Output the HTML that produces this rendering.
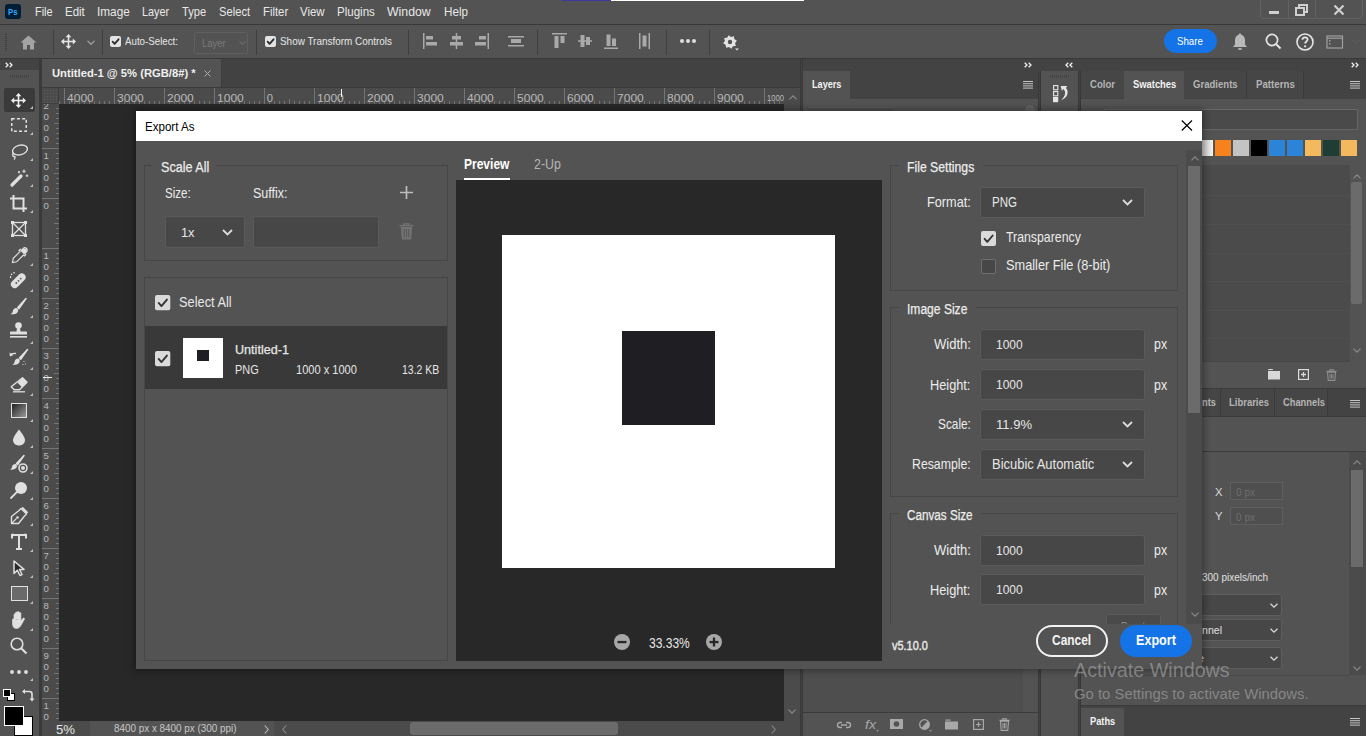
<!DOCTYPE html>
<html><head><meta charset="utf-8">
<style>
*{margin:0;padding:0;box-sizing:border-box}
html,body{width:1366px;height:736px;overflow:hidden;background:#535353;font-family:"Liberation Sans",sans-serif;color:#e6e6e6;position:relative}
.a{position:absolute}
.t{position:absolute;white-space:nowrap;line-height:1}
svg{position:absolute;overflow:visible}
</style></head><body>
<div class="a" style="left:0px;top:0px;width:1366px;height:24px;background:#535353;"></div>
<div class="a" style="left:0px;top:24px;width:1366px;height:1px;background:#383838;"></div>
<div class="a" style="left:562px;top:0px;width:49px;height:1px;background:#3a3aa0;"></div>
<div class="a" style="left:611px;top:0px;width:193px;height:1px;background:#ffffff;"></div>
<div class="a" style="left:5px;top:4px;width:16px;height:15px;background:#001e36;border-radius:3px"></div>
<div class="t" style="left:7.60px;top:7.58px;font-size:9px;color:#31a8ff;font-weight:700;transform:scaleX(0.862);transform-origin:0 0;">Ps</div>
<div class="t" style="left:35.10px;top:6.43px;font-size:12.6px;color:#e8e8e8;transform:scaleX(0.867);transform-origin:0 0;">File</div>
<div class="t" style="left:65.40px;top:6.43px;font-size:12.6px;color:#e8e8e8;transform:scaleX(0.912);transform-origin:0 0;">Edit</div>
<div class="t" style="left:97.20px;top:6.43px;font-size:12.6px;color:#e8e8e8;transform:scaleX(0.937);transform-origin:0 0;">Image</div>
<div class="t" style="left:142.40px;top:6.43px;font-size:12.6px;color:#e8e8e8;transform:scaleX(0.863);transform-origin:0 0;">Layer</div>
<div class="t" style="left:182.40px;top:6.43px;font-size:12.6px;color:#e8e8e8;transform:scaleX(0.882);transform-origin:0 0;">Type</div>
<div class="t" style="left:219.10px;top:6.43px;font-size:12.6px;color:#e8e8e8;transform:scaleX(0.888);transform-origin:0 0;">Select</div>
<div class="t" style="left:262.50px;top:6.43px;font-size:12.6px;color:#e8e8e8;transform:scaleX(0.900);transform-origin:0 0;">Filter</div>
<div class="t" style="left:300.40px;top:6.43px;font-size:12.6px;color:#e8e8e8;transform:scaleX(0.908);transform-origin:0 0;">View</div>
<div class="t" style="left:337.30px;top:6.43px;font-size:12.6px;color:#e8e8e8;transform:scaleX(0.917);transform-origin:0 0;">Plugins</div>
<div class="t" style="left:386.90px;top:6.43px;font-size:12.6px;color:#e8e8e8;transform:scaleX(0.976);transform-origin:0 0;">Window</div>
<div class="t" style="left:443.50px;top:6.43px;font-size:12.6px;color:#e8e8e8;transform:scaleX(0.926);transform-origin:0 0;">Help</div>
<div class="a" style="left:1260px;top:-2px;width:103px;height:21px;border:1px solid #626262;border-radius:0 0 4px 4px"></div>
<div class="a" style="left:1288px;top:0px;width:1px;height:19px;background:#626262;"></div>
<div class="a" style="left:1315px;top:0px;width:1px;height:19px;background:#626262;"></div>
<div class="a" style="left:1269px;top:11px;width:10px;height:3px;background:#cfcfcf;"></div>
<svg style="left:1295px;top:4px;" width="14" height="12" viewBox="0 0 14 12"><rect x="1" y="4" width="8" height="7" fill="none" stroke="#cfcfcf" stroke-width="2"/><path d="M4 4V1h8v7H9" fill="none" stroke="#cfcfcf" stroke-width="2"/></svg>
<svg style="left:1333px;top:5px;" width="12" height="10" viewBox="0 0 12 10"><path d="M1.5 0.5L10.5 9.5M10.5 0.5L1.5 9.5" stroke="#cfcfcf" stroke-width="2.2"/></svg>
<div class="a" style="left:0px;top:25px;width:1366px;height:33px;background:#535353;"></div>
<div class="a" style="left:0px;top:58px;width:1366px;height:1px;background:#383838;"></div>
<div class="a" style="left:5px;top:34px;width:2px;height:1px;background:#3e3e3e;"></div>
<div class="a" style="left:5px;top:36px;width:2px;height:1px;background:#3e3e3e;"></div>
<div class="a" style="left:5px;top:38px;width:2px;height:1px;background:#3e3e3e;"></div>
<div class="a" style="left:5px;top:40px;width:2px;height:1px;background:#3e3e3e;"></div>
<div class="a" style="left:5px;top:42px;width:2px;height:1px;background:#3e3e3e;"></div>
<div class="a" style="left:5px;top:44px;width:2px;height:1px;background:#3e3e3e;"></div>
<div class="a" style="left:5px;top:46px;width:2px;height:1px;background:#3e3e3e;"></div>
<div class="a" style="left:5px;top:48px;width:2px;height:1px;background:#3e3e3e;"></div>
<div class="a" style="left:5px;top:50px;width:2px;height:1px;background:#3e3e3e;"></div>
<svg style="left:20px;top:35px;" width="17" height="15" viewBox="0 0 17 15"><path d="M8.5 0.5L0.5 7.5H3V14.5H7V10H10V14.5H14V7.5H16.5Z" fill="#a3a3a3"/></svg>
<div class="a" style="left:53px;top:30px;width:1px;height:25px;background:#3f3f3f;"></div>
<svg style="left:61px;top:34px;" width="15" height="15" viewBox="0 0 15 15"><g fill="none" stroke="#e6e6e6" stroke-width="1.6"><path d="M7.5 1.5V13.5M1.5 7.5H13.5"/></g><g fill="#e6e6e6"><path d="M7.5 0L4.6 3.2H10.4Z"/><path d="M7.5 15L4.6 11.8H10.4Z"/><path d="M0 7.5L3.2 4.6V10.4Z"/><path d="M15 7.5L11.8 4.6V10.4Z"/></g></svg>
<svg style="left:87px;top:40px;" width="8" height="6" viewBox="0 0 8 6"><path d="M0.5 0.8L4 4.3L7.5 0.8" fill="none" stroke="#9a9a9a" stroke-width="1.3"/></svg>
<div class="a" style="left:102px;top:30px;width:1px;height:25px;background:#3f3f3f;"></div>
<svg style="left:110px;top:36px;" width="11" height="11" viewBox="0 0 11 11"><rect x="0" y="0" width="11" height="11" rx="2" fill="#e3e3e3"/><path d="M2.6399999999999997 5.720000000000001L4.62 7.92L8.58 3.3" fill="none" stroke="#2b2b2b" stroke-width="1.8" stroke-linecap="round" stroke-linejoin="round"/></svg>
<div class="t" style="left:125.00px;top:36.08px;font-size:11px;color:#e6e6e6;transform:scaleX(0.884);transform-origin:0 0;">Auto-Select:</div>
<div class="a" style="left:194px;top:32px;width:54px;height:22px;border:1px solid #5f5f5f;border-radius:2px"></div>
<div class="t" style="left:202.00px;top:37.88px;font-size:11px;color:#7a7a7a;transform:scaleX(0.861);transform-origin:0 0;">Layer</div>
<svg style="left:239px;top:41px;" width="7" height="5" viewBox="0 0 7 5"><path d="M0.5 0.5L3.5 3.5L6.5 0.5" fill="none" stroke="#6a6a6a" stroke-width="1.2"/></svg>
<div class="a" style="left:256px;top:30px;width:1px;height:25px;background:#3f3f3f;"></div>
<svg style="left:265px;top:36px;" width="11" height="11" viewBox="0 0 11 11"><rect x="0" y="0" width="11" height="11" rx="2" fill="#e3e3e3"/><path d="M2.6399999999999997 5.720000000000001L4.62 7.92L8.58 3.3" fill="none" stroke="#2b2b2b" stroke-width="1.8" stroke-linecap="round" stroke-linejoin="round"/></svg>
<div class="t" style="left:280.00px;top:35.88px;font-size:11px;color:#e6e6e6;transform:scaleX(0.902);transform-origin:0 0;">Show Transform Controls</div>
<div class="a" style="left:408px;top:30px;width:1px;height:25px;background:#3f3f3f;"></div>
<svg style="left:423px;top:33px;" width="15" height="16" viewBox="0 0 15 16"><rect x="0" y="0" width="1.5" height="16" fill="#a9a9a9"/><rect x="3" y="3" width="7" height="3.5" fill="#a9a9a9"/><rect x="3" y="9" width="11" height="3.5" fill="#a9a9a9"/></svg>
<svg style="left:450px;top:33px;" width="13" height="16" viewBox="0 0 13 16"><rect x="5.75" y="0" width="1.5" height="16" fill="#a9a9a9"/><rect x="2" y="3" width="9" height="3.5" fill="#a9a9a9"/><rect x="0" y="9" width="13" height="3.5" fill="#a9a9a9"/></svg>
<svg style="left:474px;top:33px;" width="15" height="16" viewBox="0 0 15 16"><rect x="13.5" y="0" width="1.5" height="16" fill="#a9a9a9"/><rect x="5" y="3" width="7" height="3.5" fill="#a9a9a9"/><rect x="1" y="9" width="11" height="3.5" fill="#a9a9a9"/></svg>
<svg style="left:508px;top:33px;" width="17" height="16" viewBox="0 0 17 16"><rect x="0" y="3" width="16" height="1.5" fill="#a9a9a9"/><rect x="0" y="12" width="16" height="1.5" fill="#a9a9a9"/><rect x="3" y="6" width="10" height="4" fill="#a9a9a9"/></svg>
<div class="a" style="left:537px;top:30px;width:1px;height:25px;background:#3f3f3f;"></div>
<svg style="left:552px;top:33px;" width="15" height="16" viewBox="0 0 15 16"><rect x="0" y="0" width="15" height="1.5" fill="#a9a9a9"/><rect x="2.5" y="3" width="4" height="12" fill="#a9a9a9"/><rect x="8.5" y="3" width="4" height="7" fill="#a9a9a9"/></svg>
<svg style="left:578px;top:33px;" width="14" height="16" viewBox="0 0 14 16"><rect x="0" y="7.25" width="14" height="1.5" fill="#a9a9a9"/><rect x="2.5" y="2" width="4" height="12" fill="#a9a9a9"/><rect x="8" y="4" width="4" height="8" fill="#a9a9a9"/></svg>
<svg style="left:604px;top:33px;" width="14" height="16" viewBox="0 0 14 16"><rect x="0" y="14.5" width="14" height="1.5" fill="#a9a9a9"/><rect x="2.5" y="1.5" width="4" height="11.5" fill="#a9a9a9"/><rect x="8" y="5.5" width="4" height="7.5" fill="#a9a9a9"/></svg>
<svg style="left:639px;top:33px;" width="11" height="16" viewBox="0 0 11 16"><rect x="0" y="0" width="1.5" height="16" fill="#a9a9a9"/><rect x="9.5" y="0" width="1.5" height="16" fill="#a9a9a9"/><rect x="3.5" y="2.5" width="4" height="11" fill="#a9a9a9"/></svg>
<div class="a" style="left:666px;top:30px;width:1px;height:25px;background:#3f3f3f;"></div>
<svg style="left:680px;top:39px;" width="4" height="4" viewBox="0 0 4 4"><circle cx="2" cy="2" r="2" fill="#dedede"/></svg>
<svg style="left:686px;top:39px;" width="4" height="4" viewBox="0 0 4 4"><circle cx="2" cy="2" r="2" fill="#dedede"/></svg>
<svg style="left:692px;top:39px;" width="4" height="4" viewBox="0 0 4 4"><circle cx="2" cy="2" r="2" fill="#dedede"/></svg>
<div class="a" style="left:709px;top:30px;width:1px;height:25px;background:#3f3f3f;"></div>
<svg style="left:723px;top:35px;" width="16" height="16" viewBox="0 0 16 16"><polygon points="13.87,5.63 12.10,8.01 12.82,10.89 9.89,11.32 8.37,13.87 5.99,12.10 3.11,12.82 2.68,9.89 0.13,8.37 1.90,5.99 1.18,3.11 4.11,2.68 5.63,0.13 8.01,1.90 10.89,1.18 11.32,4.11" fill="#e3e3e3"/><circle cx="7" cy="7" r="4.6" fill="#e3e3e3"/><circle cx="7" cy="7" r="2.2" fill="#535353"/><path d="M12 13.5h4l-2 2z" fill="#e3e3e3"/></svg>
<div class="a" style="left:1164px;top:29px;width:53px;height:24px;background:#1473e6;border-radius:12px"></div>
<div class="t" style="left:1177.20px;top:36.28px;font-size:11px;color:#ffffff;transform:scaleX(0.879);transform-origin:0 0;">Share</div>
<svg style="left:1232px;top:33px;" width="16" height="18" viewBox="0 0 16 18"><path d="M8 0.5C9 0.5 9.3 1.2 9.3 1.8C11.8 2.6 13 4.6 13 7.5V11.5L15 14H1L3 11.5V7.5C3 4.6 4.2 2.6 6.7 1.8C6.7 1.2 7 0.5 8 0.5Z" fill="#b9b9b9"/><path d="M6 15.2H10C10 16.3 9.1 17 8 17C6.9 17 6 16.3 6 15.2Z" fill="#b9b9b9"/></svg>
<svg style="left:1265px;top:33px;" width="17" height="17" viewBox="0 0 17 17"><circle cx="7" cy="7" r="5.6" fill="none" stroke="#e6e6e6" stroke-width="1.7"/><path d="M11 11L15.5 15.5" stroke="#e6e6e6" stroke-width="1.9"/></svg>
<svg style="left:1296px;top:33px;" width="18" height="18" viewBox="0 0 18 18"><circle cx="9" cy="9" r="8" fill="none" stroke="#e6e6e6" stroke-width="1.6"/><path d="M6.4 6.8C6.4 5.2 7.5 4.3 9 4.3C10.6 4.3 11.6 5.3 11.6 6.6C11.6 8.4 9.1 8.6 9.1 10.6" fill="none" stroke="#e6e6e6" stroke-width="1.7"/><circle cx="9.1" cy="13.3" r="1.1" fill="#e6e6e6"/></svg>
<svg style="left:1326px;top:35px;" width="18" height="14" viewBox="0 0 18 14"><rect x="1" y="1" width="15.5" height="12" fill="none" stroke="#a0a0a0" stroke-width="1.2"/><path d="M1 3.2H16.5" stroke="#a0a0a0" stroke-width="1.2"/><rect x="3" y="5" width="1.5" height="1.5" fill="#a0a0a0"/><rect x="3" y="8" width="1.5" height="1.5" fill="#a0a0a0"/></svg>
<svg style="left:1352px;top:39px;" width="8" height="5" viewBox="0 0 8 5"><path d="M0.5 0.5L4 4L7.5 0.5" fill="none" stroke="#5c5c5c" stroke-width="1.2"/></svg>
<div class="a" style="left:0px;top:59px;width:803px;height:29px;background:#424242;"></div>
<div class="a" style="left:0px;top:59px;width:39px;height:11px;background:#434343;"></div>
<svg style="left:5px;top:62px;" width="9" height="6" viewBox="0 0 9 6"><path d="M0.7 0.7L3 3L0.7 5.3M4.7 0.7L7 3L4.7 5.3" fill="none" stroke="#f0f0f0" stroke-width="1.3"/></svg>
<div class="a" style="left:42px;top:59px;width:179px;height:28px;background:#535353;"></div>
<div class="t" style="left:52.40px;top:67.37px;font-size:11.6px;color:#f0f0f0;font-weight:700;transform:scaleX(0.967);transform-origin:0 0;">Untitled-1 @ 5% (RGB/8#) *</div>
<svg style="left:204px;top:70px;" width="7" height="7" viewBox="0 0 7 7"><path d="M0.5 0.5L6.5 6.5M6.5 0.5L0.5 6.5" stroke="#b0b0b0" stroke-width="1"/></svg>
<div class="a" style="left:221px;top:59px;width:1px;height:28px;background:#3e3e3e;"></div>
<div class="a" style="left:0px;top:70px;width:39px;height:666px;background:#535353;"></div>
<div class="a" style="left:39px;top:59px;width:3px;height:677px;background:#3a3a3a;"></div>
<div class="a" style="left:10px;top:75px;width:1px;height:3px;background:#444444;"></div>
<div class="a" style="left:12px;top:75px;width:1px;height:3px;background:#444444;"></div>
<div class="a" style="left:14px;top:75px;width:1px;height:3px;background:#444444;"></div>
<div class="a" style="left:16px;top:75px;width:1px;height:3px;background:#444444;"></div>
<div class="a" style="left:18px;top:75px;width:1px;height:3px;background:#444444;"></div>
<div class="a" style="left:20px;top:75px;width:1px;height:3px;background:#444444;"></div>
<div class="a" style="left:22px;top:75px;width:1px;height:3px;background:#444444;"></div>
<div class="a" style="left:24px;top:75px;width:1px;height:3px;background:#444444;"></div>
<div class="a" style="left:26px;top:75px;width:1px;height:3px;background:#444444;"></div>
<div class="a" style="left:28px;top:75px;width:1px;height:3px;background:#444444;"></div>
<div class="a" style="left:4px;top:88px;width:31px;height:24px;background:#3a3a3a;border-radius:2px"></div>
<svg style="left:11px;top:92.5px;" width="15" height="15" viewBox="0 0 15 15"><g fill="none" stroke="#f0f0f0" stroke-width="1.6"><path d="M7.5 1.5V13.5M1.5 7.5H13.5"/></g><g fill="#f0f0f0"><path d="M7.5 0L4.6 3.2H10.4Z"/><path d="M7.5 15L4.6 11.8H10.4Z"/><path d="M0 7.5L3.2 4.6V10.4Z"/><path d="M15 7.5L11.8 4.6V10.4Z"/></g></svg>
<svg style="left:29.5px;top:105.5px;" width="3" height="3" viewBox="0 0 3 3"><path d="M3 0V3H0Z" fill="#bdbdbd"/></svg>
<svg style="left:11px;top:118px;" width="16" height="14" viewBox="0 0 16 14"><rect x="0.75" y="0.75" width="14.5" height="12.5" fill="none" stroke="#e0e0e0" stroke-width="1.5" stroke-dasharray="3 2.2"/></svg>
<svg style="left:29.5px;top:131.5px;" width="3" height="3" viewBox="0 0 3 3"><path d="M3 0V3H0Z" fill="#bdbdbd"/></svg>
<svg style="left:10px;top:144px;" width="18" height="16" viewBox="0 0 18 16"><ellipse cx="10" cy="6" rx="7.6" ry="4.8" fill="none" stroke="#e0e0e0" stroke-width="1.4" transform="rotate(-15 10 6)"/><path d="M3.5 9C2 10.5 2.5 13 4.5 12.5C5.5 12.2 5 14.5 4 15.5" fill="none" stroke="#e0e0e0" stroke-width="1.3"/></svg>
<svg style="left:29.5px;top:157.5px;" width="3" height="3" viewBox="0 0 3 3"><path d="M3 0V3H0Z" fill="#bdbdbd"/></svg>
<svg style="left:10px;top:169px;" width="19" height="18" viewBox="0 0 19 18"><path d="M2 16L11 7" stroke="#e0e0e0" stroke-width="3.2" stroke-linecap="round"/><path d="M14 0.5V4M12.3 2.2H15.7M17 5.5V8M15.8 6.7H18.2M9 2V4.2M8 3.1H10" stroke="#e0e0e0" stroke-width="1.1"/></svg>
<svg style="left:29.5px;top:183.5px;" width="3" height="3" viewBox="0 0 3 3"><path d="M3 0V3H0Z" fill="#bdbdbd"/></svg>
<svg style="left:10px;top:195px;" width="18" height="17" viewBox="0 0 18 17"><path d="M3.5 0V13.5H17M0 3.5H13.5V17" fill="none" stroke="#e0e0e0" stroke-width="2"/></svg>
<svg style="left:29.5px;top:209.5px;" width="3" height="3" viewBox="0 0 3 3"><path d="M3 0V3H0Z" fill="#bdbdbd"/></svg>
<svg style="left:11px;top:221px;" width="16" height="16" viewBox="0 0 16 16"><rect x="1.5" y="1.5" width="13" height="13" fill="none" stroke="#e0e0e0" stroke-width="1.3"/><path d="M1.5 1.5L14.5 14.5M14.5 1.5L1.5 14.5" stroke="#e0e0e0" stroke-width="1.3"/><g fill="#e0e0e0"><rect x="0" y="0" width="3" height="3"/><rect x="13" y="0" width="3" height="3"/><rect x="0" y="13" width="3" height="3"/><rect x="13" y="13" width="3" height="3"/></g></svg>
<svg style="left:11px;top:247px;" width="17" height="17" viewBox="0 0 17 17"><path d="M15.5 1.5C14.3 0.3 12.8 0.8 12 1.6L10.3 3.3L9.3 2.3L8 3.6L9 4.6L2.2 11.4L1.5 15.5L5.6 14.8L12.4 8L13.4 9L14.7 7.7L13.7 6.7L15.4 5C16.2 4.2 16.7 2.7 15.5 1.5Z" fill="none" stroke="#e0e0e0" stroke-width="1.2"/><path d="M9.5 3.8L13 7.3L15 5.3C15.8 4.5 16 3 15.2 2C14.2 1 12.6 1.4 11.8 2.2Z" fill="#e0e0e0"/></svg>
<svg style="left:29.5px;top:262.5px;" width="3" height="3" viewBox="0 0 3 3"><path d="M3 0V3H0Z" fill="#bdbdbd"/></svg>
<svg style="left:9px;top:271px;" width="19" height="19" viewBox="0 0 19 19"><path d="M15.5 3.5C17.5 5.5 17 7.5 15.5 9L8.5 16C7 17.5 5 18 3 16C1 14 1.5 12 3 10.5L10 3.5C11.5 2 13.5 1.5 15.5 3.5Z" fill="#e0e0e0"/><g fill="#535353"><circle cx="7.3" cy="12" r="0.9"/><circle cx="9.5" cy="9.8" r="0.9"/><circle cx="11.7" cy="7.6" r="0.9"/></g><path d="M1.5 7C1.5 3.5 3.5 1.5 7 1.5" fill="none" stroke="#e0e0e0" stroke-width="1.2" stroke-dasharray="1.6 1.4"/></svg>
<svg style="left:29.5px;top:288.5px;" width="3" height="3" viewBox="0 0 3 3"><path d="M3 0V3H0Z" fill="#bdbdbd"/></svg>
<svg style="left:10px;top:298px;" width="17" height="17" viewBox="0 0 17 17"><path d="M16 0.5L7.8 9.5L9 10.7Z" fill="#e0e0e0" stroke="#e0e0e0" stroke-width="1.5" stroke-linejoin="round"/><path d="M6.5 10C4.2 10 3 11.5 2.8 13.3C2.7 14.5 1.8 15.5 0.5 16.2C3.2 16.6 6.8 16.2 8 13.4C8.5 12 7.8 10.5 6.5 10Z" fill="#e0e0e0"/></svg>
<svg style="left:29.5px;top:314.5px;" width="3" height="3" viewBox="0 0 3 3"><path d="M3 0V3H0Z" fill="#bdbdbd"/></svg>
<svg style="left:9px;top:322px;" width="19" height="17" viewBox="0 0 19 17"><circle cx="9.5" cy="3.6" r="3.3" fill="#e0e0e0"/><path d="M8 6H11L11.5 9.5H17C17.8 9.5 18 10 18 10.8V12.5H1V10.8C1 10 1.2 9.5 2 9.5H7.5Z" fill="#e0e0e0"/><rect x="1" y="14" width="17" height="1.6" fill="#e0e0e0"/></svg>
<svg style="left:29.5px;top:340.5px;" width="3" height="3" viewBox="0 0 3 3"><path d="M3 0V3H0Z" fill="#bdbdbd"/></svg>
<svg style="left:9px;top:349px;" width="20" height="19" viewBox="0 0 20 19"><path d="M18.5 0.5L10.5 9L11.7 10.2Z" fill="#e0e0e0" stroke="#e0e0e0" stroke-width="1.5" stroke-linejoin="round"/><path d="M9.2 9.6C7 9.6 5.8 11 5.6 12.8C5.5 14 4.6 15 3.3 15.7C6 16.1 9.5 15.7 10.6 13C11.1 11.6 10.5 10.1 9.2 9.6Z" fill="#e0e0e0"/><path d="M1 6.5C2.5 4.5 4.5 4 7 4.5" fill="none" stroke="#e0e0e0" stroke-width="1.3"/><path d="M0.5 3.5L1 7.5L4.5 6Z" fill="#e0e0e0"/><path d="M15 12V13M14 15V16M16.5 14.5V15.5" stroke="#e0e0e0" stroke-width="0.9"/></svg>
<svg style="left:29.5px;top:366.5px;" width="3" height="3" viewBox="0 0 3 3"><path d="M3 0V3H0Z" fill="#bdbdbd"/></svg>
<svg style="left:10px;top:377px;" width="18" height="16" viewBox="0 0 18 16"><path d="M12.5 0.8L17 5.3L9.5 12.8H4.2L1.2 9.8Z" fill="none" stroke="#e0e0e0" stroke-width="1.4" stroke-linejoin="round"/><path d="M12.5 0.8L17 5.3L12 10.3L7.5 5.8Z" fill="#e0e0e0"/><path d="M3 14.8H15" stroke="#e0e0e0" stroke-width="1.3"/></svg>
<svg style="left:29.5px;top:392.5px;" width="3" height="3" viewBox="0 0 3 3"><path d="M3 0V3H0Z" fill="#bdbdbd"/></svg>
<div class="a" style="left:11px;top:403px;width:16px;height:15px;border:1.3px solid #e0e0e0;background:linear-gradient(135deg,#222 0%,#9a9a9a 100%)"></div>
<svg style="left:29.5px;top:418.5px;" width="3" height="3" viewBox="0 0 3 3"><path d="M3 0V3H0Z" fill="#bdbdbd"/></svg>
<svg style="left:12px;top:429px;" width="14" height="17" viewBox="0 0 14 17"><path d="M7 0.5C7 0.5 1 7.5 1 11C1 14.3 3.7 16.5 7 16.5C10.3 16.5 13 14.3 13 11C13 7.5 7 0.5 7 0.5Z" fill="#e0e0e0"/></svg>
<svg style="left:29.5px;top:444.5px;" width="3" height="3" viewBox="0 0 3 3"><path d="M3 0V3H0Z" fill="#bdbdbd"/></svg>
<svg style="left:10px;top:455px;" width="19" height="18" viewBox="0 0 19 18"><path d="M14 0.5L6.5 8.5L7.7 9.7Z" fill="#e0e0e0" stroke="#e0e0e0" stroke-width="1.5" stroke-linejoin="round"/><path d="M5.5 9C3.5 9 2.3 10.3 2 12C1.9 13 1.1 14 0 14.6C2.5 15 5.8 14.5 6.8 12.3C7.2 11 6.7 9.5 5.5 9Z" fill="#e0e0e0"/><circle cx="13" cy="13" r="4" fill="none" stroke="#e0e0e0" stroke-width="1.6"/><circle cx="13" cy="13" r="2" fill="#e0e0e0"/></svg>
<svg style="left:29.5px;top:470.5px;" width="3" height="3" viewBox="0 0 3 3"><path d="M3 0V3H0Z" fill="#bdbdbd"/></svg>
<svg style="left:10px;top:481px;" width="18" height="18" viewBox="0 0 18 18"><circle cx="11" cy="7" r="6" fill="#e0e0e0"/><path d="M6.8 11.2L1 17" stroke="#e0e0e0" stroke-width="1.8" stroke-linecap="round"/></svg>
<svg style="left:29.5px;top:496.5px;" width="3" height="3" viewBox="0 0 3 3"><path d="M3 0V3H0Z" fill="#bdbdbd"/></svg>
<svg style="left:10px;top:507px;" width="18" height="18" viewBox="0 0 18 18"><path d="M11 1.5L16.5 7L14.5 9L8.5 16.5L1.5 16.5L1.5 9.5L9 3.5Z" fill="none" stroke="#e0e0e0" stroke-width="1.4" stroke-linejoin="round"/><path d="M12 0.5L17.5 6" stroke="#e0e0e0" stroke-width="2"/><path d="M1.5 16.5L6.5 11.5" stroke="#e0e0e0" stroke-width="1.1"/><circle cx="7.5" cy="10.5" r="1.3" fill="#e0e0e0"/></svg>
<svg style="left:29.5px;top:522.5px;" width="3" height="3" viewBox="0 0 3 3"><path d="M3 0V3H0Z" fill="#bdbdbd"/></svg>
<svg style="left:11px;top:534px;" width="16" height="16" viewBox="0 0 16 16"><path d="M1 4.5V1H15V4.5M8 1V15M5 15H11" fill="none" stroke="#e0e0e0" stroke-width="2"/><path d="M0.5 0.5H3M13 0.5H15.5" stroke="#e0e0e0" stroke-width="1.5"/></svg>
<svg style="left:29.5px;top:548.5px;" width="3" height="3" viewBox="0 0 3 3"><path d="M3 0V3H0Z" fill="#bdbdbd"/></svg>
<svg style="left:13px;top:560px;" width="13" height="16" viewBox="0 0 13 16"><path d="M1 1L1 13.5L4.3 10.3L7 15.5L9 14.5L6.4 9.4H11Z" fill="#2a2a2a" stroke="#e0e0e0" stroke-width="1.5" stroke-linejoin="round"/></svg>
<svg style="left:29.5px;top:574.5px;" width="3" height="3" viewBox="0 0 3 3"><path d="M3 0V3H0Z" fill="#bdbdbd"/></svg>
<div class="a" style="left:11px;top:586px;width:17px;height:15px;border:1.4px solid #e0e0e0;background:#6a6a6a"></div>
<svg style="left:29.5px;top:600.5px;" width="3" height="3" viewBox="0 0 3 3"><path d="M3 0V3H0Z" fill="#bdbdbd"/></svg>
<svg style="left:10px;top:611px;" width="18" height="18" viewBox="0 0 18 18"><path d="M4 9.5V3.5C4 2.5 5.5 2.5 5.5 3.5V8.5M5.5 8V1.8C5.5 0.8 7.3 0.8 7.3 1.8V8M7.3 8V1.2C7.3 0.2 9.1 0.2 9.1 1.2V8M9.1 8V2.2C9.1 1.2 10.9 1.2 10.9 2.2V10L12.8 7.5C13.6 6.5 15 7.3 14.3 8.5L11.2 14C10 16.3 8.5 17.5 6.5 17.5C4 17.5 2.5 15.5 2.5 13V8.5C2.5 7.5 4 7.5 4 8.5" fill="#e0e0e0" stroke="#e0e0e0" stroke-width="0.6"/></svg>
<svg style="left:29.5px;top:627.5px;" width="3" height="3" viewBox="0 0 3 3"><path d="M3 0V3H0Z" fill="#bdbdbd"/></svg>
<svg style="left:10px;top:637px;" width="18" height="18" viewBox="0 0 18 18"><circle cx="7" cy="7" r="5.8" fill="none" stroke="#e0e0e0" stroke-width="1.6"/><path d="M11.2 11.2L16.5 16.5" stroke="#e0e0e0" stroke-width="2"/></svg>
<svg style="left:10px;top:670px;" width="4" height="4" viewBox="0 0 4 4"><circle cx="2" cy="2" r="1.9" fill="#e0e0e0"/></svg>
<svg style="left:17px;top:670px;" width="4" height="4" viewBox="0 0 4 4"><circle cx="2" cy="2" r="1.9" fill="#e0e0e0"/></svg>
<svg style="left:24px;top:670px;" width="4" height="4" viewBox="0 0 4 4"><circle cx="2" cy="2" r="1.9" fill="#e0e0e0"/></svg>
<svg style="left:29.5px;top:677.5px;" width="3" height="3" viewBox="0 0 3 3"><path d="M3 0V3H0Z" fill="#bdbdbd"/></svg>
<svg style="left:3px;top:689px;" width="12" height="12" viewBox="0 0 12 12"><rect x="4.5" y="4.5" width="7" height="7" fill="#ffffff" stroke="#000" stroke-width="1"/><rect x="0.5" y="0.5" width="7" height="7" fill="#000" stroke="#fff" stroke-width="1"/></svg>
<svg style="left:22px;top:689px;" width="12" height="13" viewBox="0 0 12 13"><path d="M2 2.5H7.5C9.5 2.5 10 3 10 5V10" fill="none" stroke="#e0e0e0" stroke-width="1.6"/><path d="M0 2.5L3 0V5Z" fill="#e0e0e0"/><path d="M10 12.5L7.5 9.5H12.5Z" fill="#e0e0e0"/></svg>
<div class="a" style="left:14px;top:716px;width:19px;height:20px;background:#fff;border:1px solid #000"></div>
<div class="a" style="left:4px;top:706px;width:20px;height:20px;background:#000;border:1.5px solid #fff"></div>
<div class="a" style="left:42px;top:87px;width:758px;height:1px;background:#3a3a3a;"></div>
<div class="a" style="left:42px;top:88px;width:742px;height:16px;background:#4b4b4b;"></div>
<div class="a" style="left:42px;top:104px;width:17px;height:617px;background:#4b4b4b;"></div>
<div class="a" style="left:44px;top:90px;width:1px;height:1px;background:#5e5e5e;"></div>
<div class="a" style="left:44px;top:93px;width:1px;height:1px;background:#5e5e5e;"></div>
<div class="a" style="left:44px;top:96px;width:1px;height:1px;background:#5e5e5e;"></div>
<div class="a" style="left:44px;top:99px;width:1px;height:1px;background:#5e5e5e;"></div>
<div class="a" style="left:44px;top:102px;width:1px;height:1px;background:#5e5e5e;"></div>
<div class="a" style="left:47px;top:90px;width:1px;height:1px;background:#5e5e5e;"></div>
<div class="a" style="left:47px;top:93px;width:1px;height:1px;background:#5e5e5e;"></div>
<div class="a" style="left:47px;top:96px;width:1px;height:1px;background:#5e5e5e;"></div>
<div class="a" style="left:47px;top:99px;width:1px;height:1px;background:#5e5e5e;"></div>
<div class="a" style="left:47px;top:102px;width:1px;height:1px;background:#5e5e5e;"></div>
<div class="a" style="left:50px;top:90px;width:1px;height:1px;background:#5e5e5e;"></div>
<div class="a" style="left:50px;top:93px;width:1px;height:1px;background:#5e5e5e;"></div>
<div class="a" style="left:50px;top:96px;width:1px;height:1px;background:#5e5e5e;"></div>
<div class="a" style="left:50px;top:99px;width:1px;height:1px;background:#5e5e5e;"></div>
<div class="a" style="left:50px;top:102px;width:1px;height:1px;background:#5e5e5e;"></div>
<div class="a" style="left:53px;top:90px;width:1px;height:1px;background:#5e5e5e;"></div>
<div class="a" style="left:53px;top:93px;width:1px;height:1px;background:#5e5e5e;"></div>
<div class="a" style="left:53px;top:96px;width:1px;height:1px;background:#5e5e5e;"></div>
<div class="a" style="left:53px;top:99px;width:1px;height:1px;background:#5e5e5e;"></div>
<div class="a" style="left:53px;top:102px;width:1px;height:1px;background:#5e5e5e;"></div>
<div class="a" style="left:56px;top:90px;width:1px;height:1px;background:#5e5e5e;"></div>
<div class="a" style="left:56px;top:93px;width:1px;height:1px;background:#5e5e5e;"></div>
<div class="a" style="left:56px;top:96px;width:1px;height:1px;background:#5e5e5e;"></div>
<div class="a" style="left:56px;top:99px;width:1px;height:1px;background:#5e5e5e;"></div>
<div class="a" style="left:56px;top:102px;width:1px;height:1px;background:#5e5e5e;"></div>
<div class="a" style="left:58px;top:88px;width:1px;height:16px;background:#3e3e3e;"></div>
<div class="a" style="left:42px;top:103px;width:17px;height:1px;background:#3e3e3e;"></div>
<div class="a" style="left:59px;top:101px;width:1px;height:3px;background:#747474;"></div>
<div class="a" style="left:64px;top:88px;width:1px;height:16px;background:#747474;"></div>
<div class="a" style="left:69px;top:101px;width:1px;height:3px;background:#747474;"></div>
<div class="a" style="left:74px;top:101px;width:1px;height:3px;background:#747474;"></div>
<div class="a" style="left:79px;top:101px;width:1px;height:3px;background:#747474;"></div>
<div class="a" style="left:84px;top:101px;width:1px;height:3px;background:#747474;"></div>
<div class="a" style="left:89px;top:99px;width:1px;height:5px;background:#747474;"></div>
<div class="a" style="left:94px;top:101px;width:1px;height:3px;background:#747474;"></div>
<div class="a" style="left:99px;top:101px;width:1px;height:3px;background:#747474;"></div>
<div class="a" style="left:104px;top:101px;width:1px;height:3px;background:#747474;"></div>
<div class="a" style="left:109px;top:101px;width:1px;height:3px;background:#747474;"></div>
<div class="t" style="left:66.80px;top:92.81px;font-size:11.2px;color:#b9b9b9;transform:scaleX(1.077);transform-origin:0 0;">4000</div>
<div class="a" style="left:114px;top:88px;width:1px;height:16px;background:#747474;"></div>
<div class="a" style="left:119px;top:101px;width:1px;height:3px;background:#747474;"></div>
<div class="a" style="left:124px;top:101px;width:1px;height:3px;background:#747474;"></div>
<div class="a" style="left:129px;top:101px;width:1px;height:3px;background:#747474;"></div>
<div class="a" style="left:134px;top:101px;width:1px;height:3px;background:#747474;"></div>
<div class="a" style="left:139px;top:99px;width:1px;height:5px;background:#747474;"></div>
<div class="a" style="left:144px;top:101px;width:1px;height:3px;background:#747474;"></div>
<div class="a" style="left:149px;top:101px;width:1px;height:3px;background:#747474;"></div>
<div class="a" style="left:154px;top:101px;width:1px;height:3px;background:#747474;"></div>
<div class="a" style="left:159px;top:101px;width:1px;height:3px;background:#747474;"></div>
<div class="t" style="left:116.80px;top:92.81px;font-size:11.2px;color:#b9b9b9;transform:scaleX(1.077);transform-origin:0 0;">3000</div>
<div class="a" style="left:164px;top:88px;width:1px;height:16px;background:#747474;"></div>
<div class="a" style="left:169px;top:101px;width:1px;height:3px;background:#747474;"></div>
<div class="a" style="left:174px;top:101px;width:1px;height:3px;background:#747474;"></div>
<div class="a" style="left:179px;top:101px;width:1px;height:3px;background:#747474;"></div>
<div class="a" style="left:184px;top:101px;width:1px;height:3px;background:#747474;"></div>
<div class="a" style="left:189px;top:99px;width:1px;height:5px;background:#747474;"></div>
<div class="a" style="left:194px;top:101px;width:1px;height:3px;background:#747474;"></div>
<div class="a" style="left:199px;top:101px;width:1px;height:3px;background:#747474;"></div>
<div class="a" style="left:204px;top:101px;width:1px;height:3px;background:#747474;"></div>
<div class="a" style="left:209px;top:101px;width:1px;height:3px;background:#747474;"></div>
<div class="t" style="left:166.80px;top:92.81px;font-size:11.2px;color:#b9b9b9;transform:scaleX(1.077);transform-origin:0 0;">2000</div>
<div class="a" style="left:214px;top:88px;width:1px;height:16px;background:#747474;"></div>
<div class="a" style="left:219px;top:101px;width:1px;height:3px;background:#747474;"></div>
<div class="a" style="left:224px;top:101px;width:1px;height:3px;background:#747474;"></div>
<div class="a" style="left:229px;top:101px;width:1px;height:3px;background:#747474;"></div>
<div class="a" style="left:234px;top:101px;width:1px;height:3px;background:#747474;"></div>
<div class="a" style="left:239px;top:99px;width:1px;height:5px;background:#747474;"></div>
<div class="a" style="left:244px;top:101px;width:1px;height:3px;background:#747474;"></div>
<div class="a" style="left:249px;top:101px;width:1px;height:3px;background:#747474;"></div>
<div class="a" style="left:254px;top:101px;width:1px;height:3px;background:#747474;"></div>
<div class="a" style="left:259px;top:101px;width:1px;height:3px;background:#747474;"></div>
<div class="t" style="left:216.80px;top:92.81px;font-size:11.2px;color:#b9b9b9;transform:scaleX(1.077);transform-origin:0 0;">1000</div>
<div class="a" style="left:264px;top:88px;width:1px;height:16px;background:#747474;"></div>
<div class="a" style="left:269px;top:101px;width:1px;height:3px;background:#747474;"></div>
<div class="a" style="left:274px;top:101px;width:1px;height:3px;background:#747474;"></div>
<div class="a" style="left:279px;top:101px;width:1px;height:3px;background:#747474;"></div>
<div class="a" style="left:284px;top:101px;width:1px;height:3px;background:#747474;"></div>
<div class="a" style="left:289px;top:99px;width:1px;height:5px;background:#747474;"></div>
<div class="a" style="left:294px;top:101px;width:1px;height:3px;background:#747474;"></div>
<div class="a" style="left:299px;top:101px;width:1px;height:3px;background:#747474;"></div>
<div class="a" style="left:304px;top:101px;width:1px;height:3px;background:#747474;"></div>
<div class="a" style="left:309px;top:101px;width:1px;height:3px;background:#747474;"></div>
<div class="t" style="left:266.80px;top:92.81px;font-size:11.2px;color:#b9b9b9;">0</div>
<div class="a" style="left:314px;top:88px;width:1px;height:16px;background:#747474;"></div>
<div class="a" style="left:319px;top:101px;width:1px;height:3px;background:#747474;"></div>
<div class="a" style="left:324px;top:101px;width:1px;height:3px;background:#747474;"></div>
<div class="a" style="left:329px;top:101px;width:1px;height:3px;background:#747474;"></div>
<div class="a" style="left:334px;top:101px;width:1px;height:3px;background:#747474;"></div>
<div class="a" style="left:339px;top:99px;width:1px;height:5px;background:#747474;"></div>
<div class="a" style="left:344px;top:101px;width:1px;height:3px;background:#747474;"></div>
<div class="a" style="left:349px;top:101px;width:1px;height:3px;background:#747474;"></div>
<div class="a" style="left:354px;top:101px;width:1px;height:3px;background:#747474;"></div>
<div class="a" style="left:359px;top:101px;width:1px;height:3px;background:#747474;"></div>
<div class="t" style="left:316.80px;top:92.81px;font-size:11.2px;color:#b9b9b9;transform:scaleX(1.077);transform-origin:0 0;">1000</div>
<div class="a" style="left:364px;top:88px;width:1px;height:16px;background:#747474;"></div>
<div class="a" style="left:369px;top:101px;width:1px;height:3px;background:#747474;"></div>
<div class="a" style="left:374px;top:101px;width:1px;height:3px;background:#747474;"></div>
<div class="a" style="left:379px;top:101px;width:1px;height:3px;background:#747474;"></div>
<div class="a" style="left:384px;top:101px;width:1px;height:3px;background:#747474;"></div>
<div class="a" style="left:389px;top:99px;width:1px;height:5px;background:#747474;"></div>
<div class="a" style="left:394px;top:101px;width:1px;height:3px;background:#747474;"></div>
<div class="a" style="left:399px;top:101px;width:1px;height:3px;background:#747474;"></div>
<div class="a" style="left:404px;top:101px;width:1px;height:3px;background:#747474;"></div>
<div class="a" style="left:409px;top:101px;width:1px;height:3px;background:#747474;"></div>
<div class="t" style="left:366.80px;top:92.81px;font-size:11.2px;color:#b9b9b9;transform:scaleX(1.077);transform-origin:0 0;">2000</div>
<div class="a" style="left:414px;top:88px;width:1px;height:16px;background:#747474;"></div>
<div class="a" style="left:419px;top:101px;width:1px;height:3px;background:#747474;"></div>
<div class="a" style="left:424px;top:101px;width:1px;height:3px;background:#747474;"></div>
<div class="a" style="left:429px;top:101px;width:1px;height:3px;background:#747474;"></div>
<div class="a" style="left:434px;top:101px;width:1px;height:3px;background:#747474;"></div>
<div class="a" style="left:439px;top:99px;width:1px;height:5px;background:#747474;"></div>
<div class="a" style="left:444px;top:101px;width:1px;height:3px;background:#747474;"></div>
<div class="a" style="left:449px;top:101px;width:1px;height:3px;background:#747474;"></div>
<div class="a" style="left:454px;top:101px;width:1px;height:3px;background:#747474;"></div>
<div class="a" style="left:459px;top:101px;width:1px;height:3px;background:#747474;"></div>
<div class="t" style="left:416.80px;top:92.81px;font-size:11.2px;color:#b9b9b9;transform:scaleX(1.077);transform-origin:0 0;">3000</div>
<div class="a" style="left:464px;top:88px;width:1px;height:16px;background:#747474;"></div>
<div class="a" style="left:469px;top:101px;width:1px;height:3px;background:#747474;"></div>
<div class="a" style="left:474px;top:101px;width:1px;height:3px;background:#747474;"></div>
<div class="a" style="left:479px;top:101px;width:1px;height:3px;background:#747474;"></div>
<div class="a" style="left:484px;top:101px;width:1px;height:3px;background:#747474;"></div>
<div class="a" style="left:489px;top:99px;width:1px;height:5px;background:#747474;"></div>
<div class="a" style="left:494px;top:101px;width:1px;height:3px;background:#747474;"></div>
<div class="a" style="left:499px;top:101px;width:1px;height:3px;background:#747474;"></div>
<div class="a" style="left:504px;top:101px;width:1px;height:3px;background:#747474;"></div>
<div class="a" style="left:509px;top:101px;width:1px;height:3px;background:#747474;"></div>
<div class="t" style="left:466.80px;top:92.81px;font-size:11.2px;color:#b9b9b9;transform:scaleX(1.077);transform-origin:0 0;">4000</div>
<div class="a" style="left:514px;top:88px;width:1px;height:16px;background:#747474;"></div>
<div class="a" style="left:519px;top:101px;width:1px;height:3px;background:#747474;"></div>
<div class="a" style="left:524px;top:101px;width:1px;height:3px;background:#747474;"></div>
<div class="a" style="left:529px;top:101px;width:1px;height:3px;background:#747474;"></div>
<div class="a" style="left:534px;top:101px;width:1px;height:3px;background:#747474;"></div>
<div class="a" style="left:539px;top:99px;width:1px;height:5px;background:#747474;"></div>
<div class="a" style="left:544px;top:101px;width:1px;height:3px;background:#747474;"></div>
<div class="a" style="left:549px;top:101px;width:1px;height:3px;background:#747474;"></div>
<div class="a" style="left:554px;top:101px;width:1px;height:3px;background:#747474;"></div>
<div class="a" style="left:559px;top:101px;width:1px;height:3px;background:#747474;"></div>
<div class="t" style="left:516.80px;top:92.81px;font-size:11.2px;color:#b9b9b9;transform:scaleX(1.077);transform-origin:0 0;">5000</div>
<div class="a" style="left:564px;top:88px;width:1px;height:16px;background:#747474;"></div>
<div class="a" style="left:569px;top:101px;width:1px;height:3px;background:#747474;"></div>
<div class="a" style="left:574px;top:101px;width:1px;height:3px;background:#747474;"></div>
<div class="a" style="left:579px;top:101px;width:1px;height:3px;background:#747474;"></div>
<div class="a" style="left:584px;top:101px;width:1px;height:3px;background:#747474;"></div>
<div class="a" style="left:589px;top:99px;width:1px;height:5px;background:#747474;"></div>
<div class="a" style="left:594px;top:101px;width:1px;height:3px;background:#747474;"></div>
<div class="a" style="left:599px;top:101px;width:1px;height:3px;background:#747474;"></div>
<div class="a" style="left:604px;top:101px;width:1px;height:3px;background:#747474;"></div>
<div class="a" style="left:609px;top:101px;width:1px;height:3px;background:#747474;"></div>
<div class="t" style="left:566.80px;top:92.81px;font-size:11.2px;color:#b9b9b9;transform:scaleX(1.077);transform-origin:0 0;">6000</div>
<div class="a" style="left:614px;top:88px;width:1px;height:16px;background:#747474;"></div>
<div class="a" style="left:619px;top:101px;width:1px;height:3px;background:#747474;"></div>
<div class="a" style="left:624px;top:101px;width:1px;height:3px;background:#747474;"></div>
<div class="a" style="left:629px;top:101px;width:1px;height:3px;background:#747474;"></div>
<div class="a" style="left:634px;top:101px;width:1px;height:3px;background:#747474;"></div>
<div class="a" style="left:639px;top:99px;width:1px;height:5px;background:#747474;"></div>
<div class="a" style="left:644px;top:101px;width:1px;height:3px;background:#747474;"></div>
<div class="a" style="left:649px;top:101px;width:1px;height:3px;background:#747474;"></div>
<div class="a" style="left:654px;top:101px;width:1px;height:3px;background:#747474;"></div>
<div class="a" style="left:659px;top:101px;width:1px;height:3px;background:#747474;"></div>
<div class="t" style="left:616.80px;top:92.81px;font-size:11.2px;color:#b9b9b9;transform:scaleX(1.077);transform-origin:0 0;">7000</div>
<div class="a" style="left:664px;top:88px;width:1px;height:16px;background:#747474;"></div>
<div class="a" style="left:669px;top:101px;width:1px;height:3px;background:#747474;"></div>
<div class="a" style="left:674px;top:101px;width:1px;height:3px;background:#747474;"></div>
<div class="a" style="left:679px;top:101px;width:1px;height:3px;background:#747474;"></div>
<div class="a" style="left:684px;top:101px;width:1px;height:3px;background:#747474;"></div>
<div class="a" style="left:689px;top:99px;width:1px;height:5px;background:#747474;"></div>
<div class="a" style="left:694px;top:101px;width:1px;height:3px;background:#747474;"></div>
<div class="a" style="left:699px;top:101px;width:1px;height:3px;background:#747474;"></div>
<div class="a" style="left:704px;top:101px;width:1px;height:3px;background:#747474;"></div>
<div class="a" style="left:709px;top:101px;width:1px;height:3px;background:#747474;"></div>
<div class="t" style="left:666.80px;top:92.81px;font-size:11.2px;color:#b9b9b9;transform:scaleX(1.077);transform-origin:0 0;">8000</div>
<div class="a" style="left:714px;top:88px;width:1px;height:16px;background:#747474;"></div>
<div class="a" style="left:719px;top:101px;width:1px;height:3px;background:#747474;"></div>
<div class="a" style="left:724px;top:101px;width:1px;height:3px;background:#747474;"></div>
<div class="a" style="left:729px;top:101px;width:1px;height:3px;background:#747474;"></div>
<div class="a" style="left:734px;top:101px;width:1px;height:3px;background:#747474;"></div>
<div class="a" style="left:739px;top:99px;width:1px;height:5px;background:#747474;"></div>
<div class="a" style="left:744px;top:101px;width:1px;height:3px;background:#747474;"></div>
<div class="a" style="left:749px;top:101px;width:1px;height:3px;background:#747474;"></div>
<div class="a" style="left:754px;top:101px;width:1px;height:3px;background:#747474;"></div>
<div class="a" style="left:759px;top:101px;width:1px;height:3px;background:#747474;"></div>
<div class="t" style="left:716.80px;top:92.81px;font-size:11.2px;color:#b9b9b9;transform:scaleX(1.077);transform-origin:0 0;">9000</div>
<div class="a" style="left:764px;top:88px;width:1px;height:16px;background:#747474;"></div>
<div class="a" style="left:769px;top:101px;width:1px;height:3px;background:#747474;"></div>
<div class="a" style="left:774px;top:101px;width:1px;height:3px;background:#747474;"></div>
<div class="a" style="left:779px;top:101px;width:1px;height:3px;background:#747474;"></div>
<div class="t" style="left:766.50px;top:93.45px;font-size:9.5px;color:#b9b9b9;transform:scaleX(0.804);transform-origin:0 0;">1000</div>
<div class="a" style="left:341px;top:89px;width:1px;height:8px;background:#f4f4f4;"></div>
<div class="a" style="left:784px;top:88px;width:16px;height:16px;background:#4b4b4b;"></div>
<div class="a" style="left:0;top:104px;width:59px;height:617px;overflow:hidden"><div class="a" style="left:0;top:-104px;width:59px;height:736px">
<div class="a" style="left:56px;top:108px;width:3px;height:1px;background:#747474;"></div>
<div class="a" style="left:56px;top:113px;width:3px;height:1px;background:#747474;"></div>
<div class="a" style="left:56px;top:118px;width:3px;height:1px;background:#747474;"></div>
<div class="a" style="left:54px;top:123px;width:5px;height:1px;background:#747474;"></div>
<div class="a" style="left:56px;top:128px;width:3px;height:1px;background:#747474;"></div>
<div class="a" style="left:56px;top:133px;width:3px;height:1px;background:#747474;"></div>
<div class="a" style="left:56px;top:138px;width:3px;height:1px;background:#747474;"></div>
<div class="a" style="left:56px;top:143px;width:3px;height:1px;background:#747474;"></div>
<div class="t" style="left:43.50px;top:101.17px;font-size:9.6px;color:#b9b9b9;">2</div>
<div class="t" style="left:43.50px;top:112.07px;font-size:9.6px;color:#b9b9b9;">0</div>
<div class="t" style="left:43.50px;top:122.97px;font-size:9.6px;color:#b9b9b9;">0</div>
<div class="t" style="left:43.50px;top:133.87px;font-size:9.6px;color:#b9b9b9;">0</div>
<div class="a" style="left:42px;top:148px;width:17px;height:1px;background:#747474;"></div>
<div class="a" style="left:56px;top:153px;width:3px;height:1px;background:#747474;"></div>
<div class="a" style="left:56px;top:158px;width:3px;height:1px;background:#747474;"></div>
<div class="a" style="left:56px;top:163px;width:3px;height:1px;background:#747474;"></div>
<div class="a" style="left:56px;top:168px;width:3px;height:1px;background:#747474;"></div>
<div class="a" style="left:54px;top:173px;width:5px;height:1px;background:#747474;"></div>
<div class="a" style="left:56px;top:178px;width:3px;height:1px;background:#747474;"></div>
<div class="a" style="left:56px;top:183px;width:3px;height:1px;background:#747474;"></div>
<div class="a" style="left:56px;top:188px;width:3px;height:1px;background:#747474;"></div>
<div class="a" style="left:56px;top:193px;width:3px;height:1px;background:#747474;"></div>
<div class="t" style="left:43.50px;top:151.17px;font-size:9.6px;color:#b9b9b9;">1</div>
<div class="t" style="left:43.50px;top:162.07px;font-size:9.6px;color:#b9b9b9;">0</div>
<div class="t" style="left:43.50px;top:172.97px;font-size:9.6px;color:#b9b9b9;">0</div>
<div class="t" style="left:43.50px;top:183.87px;font-size:9.6px;color:#b9b9b9;">0</div>
<div class="a" style="left:42px;top:198px;width:17px;height:1px;background:#747474;"></div>
<div class="a" style="left:56px;top:203px;width:3px;height:1px;background:#747474;"></div>
<div class="a" style="left:56px;top:208px;width:3px;height:1px;background:#747474;"></div>
<div class="a" style="left:56px;top:213px;width:3px;height:1px;background:#747474;"></div>
<div class="a" style="left:56px;top:218px;width:3px;height:1px;background:#747474;"></div>
<div class="a" style="left:54px;top:223px;width:5px;height:1px;background:#747474;"></div>
<div class="a" style="left:56px;top:228px;width:3px;height:1px;background:#747474;"></div>
<div class="a" style="left:56px;top:233px;width:3px;height:1px;background:#747474;"></div>
<div class="a" style="left:56px;top:238px;width:3px;height:1px;background:#747474;"></div>
<div class="a" style="left:56px;top:243px;width:3px;height:1px;background:#747474;"></div>
<div class="t" style="left:43.50px;top:201.17px;font-size:9.6px;color:#b9b9b9;">0</div>
<div class="a" style="left:42px;top:248px;width:17px;height:1px;background:#747474;"></div>
<div class="a" style="left:56px;top:253px;width:3px;height:1px;background:#747474;"></div>
<div class="a" style="left:56px;top:258px;width:3px;height:1px;background:#747474;"></div>
<div class="a" style="left:56px;top:263px;width:3px;height:1px;background:#747474;"></div>
<div class="a" style="left:56px;top:268px;width:3px;height:1px;background:#747474;"></div>
<div class="a" style="left:54px;top:273px;width:5px;height:1px;background:#747474;"></div>
<div class="a" style="left:56px;top:278px;width:3px;height:1px;background:#747474;"></div>
<div class="a" style="left:56px;top:283px;width:3px;height:1px;background:#747474;"></div>
<div class="a" style="left:56px;top:288px;width:3px;height:1px;background:#747474;"></div>
<div class="a" style="left:56px;top:293px;width:3px;height:1px;background:#747474;"></div>
<div class="t" style="left:43.50px;top:251.17px;font-size:9.6px;color:#b9b9b9;">1</div>
<div class="t" style="left:43.50px;top:262.07px;font-size:9.6px;color:#b9b9b9;">0</div>
<div class="t" style="left:43.50px;top:272.97px;font-size:9.6px;color:#b9b9b9;">0</div>
<div class="t" style="left:43.50px;top:283.87px;font-size:9.6px;color:#b9b9b9;">0</div>
<div class="a" style="left:42px;top:298px;width:17px;height:1px;background:#747474;"></div>
<div class="a" style="left:56px;top:303px;width:3px;height:1px;background:#747474;"></div>
<div class="a" style="left:56px;top:308px;width:3px;height:1px;background:#747474;"></div>
<div class="a" style="left:56px;top:313px;width:3px;height:1px;background:#747474;"></div>
<div class="a" style="left:56px;top:318px;width:3px;height:1px;background:#747474;"></div>
<div class="a" style="left:54px;top:323px;width:5px;height:1px;background:#747474;"></div>
<div class="a" style="left:56px;top:328px;width:3px;height:1px;background:#747474;"></div>
<div class="a" style="left:56px;top:333px;width:3px;height:1px;background:#747474;"></div>
<div class="a" style="left:56px;top:338px;width:3px;height:1px;background:#747474;"></div>
<div class="a" style="left:56px;top:343px;width:3px;height:1px;background:#747474;"></div>
<div class="t" style="left:43.50px;top:301.17px;font-size:9.6px;color:#b9b9b9;">2</div>
<div class="t" style="left:43.50px;top:312.07px;font-size:9.6px;color:#b9b9b9;">0</div>
<div class="t" style="left:43.50px;top:322.97px;font-size:9.6px;color:#b9b9b9;">0</div>
<div class="t" style="left:43.50px;top:333.87px;font-size:9.6px;color:#b9b9b9;">0</div>
<div class="a" style="left:42px;top:348px;width:17px;height:1px;background:#747474;"></div>
<div class="a" style="left:56px;top:353px;width:3px;height:1px;background:#747474;"></div>
<div class="a" style="left:56px;top:358px;width:3px;height:1px;background:#747474;"></div>
<div class="a" style="left:56px;top:363px;width:3px;height:1px;background:#747474;"></div>
<div class="a" style="left:56px;top:368px;width:3px;height:1px;background:#747474;"></div>
<div class="a" style="left:54px;top:373px;width:5px;height:1px;background:#747474;"></div>
<div class="a" style="left:56px;top:378px;width:3px;height:1px;background:#747474;"></div>
<div class="a" style="left:56px;top:383px;width:3px;height:1px;background:#747474;"></div>
<div class="a" style="left:56px;top:388px;width:3px;height:1px;background:#747474;"></div>
<div class="a" style="left:56px;top:393px;width:3px;height:1px;background:#747474;"></div>
<div class="t" style="left:43.50px;top:351.17px;font-size:9.6px;color:#b9b9b9;">3</div>
<div class="t" style="left:43.50px;top:362.07px;font-size:9.6px;color:#b9b9b9;">0</div>
<div class="t" style="left:43.50px;top:372.97px;font-size:9.6px;color:#b9b9b9;">0</div>
<div class="t" style="left:43.50px;top:383.87px;font-size:9.6px;color:#b9b9b9;">0</div>
<div class="a" style="left:42px;top:398px;width:17px;height:1px;background:#747474;"></div>
<div class="a" style="left:56px;top:403px;width:3px;height:1px;background:#747474;"></div>
<div class="a" style="left:56px;top:408px;width:3px;height:1px;background:#747474;"></div>
<div class="a" style="left:56px;top:413px;width:3px;height:1px;background:#747474;"></div>
<div class="a" style="left:56px;top:418px;width:3px;height:1px;background:#747474;"></div>
<div class="a" style="left:54px;top:423px;width:5px;height:1px;background:#747474;"></div>
<div class="a" style="left:56px;top:428px;width:3px;height:1px;background:#747474;"></div>
<div class="a" style="left:56px;top:433px;width:3px;height:1px;background:#747474;"></div>
<div class="a" style="left:56px;top:438px;width:3px;height:1px;background:#747474;"></div>
<div class="a" style="left:56px;top:443px;width:3px;height:1px;background:#747474;"></div>
<div class="t" style="left:43.50px;top:401.17px;font-size:9.6px;color:#b9b9b9;">4</div>
<div class="t" style="left:43.50px;top:412.07px;font-size:9.6px;color:#b9b9b9;">0</div>
<div class="t" style="left:43.50px;top:422.97px;font-size:9.6px;color:#b9b9b9;">0</div>
<div class="t" style="left:43.50px;top:433.87px;font-size:9.6px;color:#b9b9b9;">0</div>
<div class="a" style="left:42px;top:448px;width:17px;height:1px;background:#747474;"></div>
<div class="a" style="left:56px;top:453px;width:3px;height:1px;background:#747474;"></div>
<div class="a" style="left:56px;top:458px;width:3px;height:1px;background:#747474;"></div>
<div class="a" style="left:56px;top:463px;width:3px;height:1px;background:#747474;"></div>
<div class="a" style="left:56px;top:468px;width:3px;height:1px;background:#747474;"></div>
<div class="a" style="left:54px;top:473px;width:5px;height:1px;background:#747474;"></div>
<div class="a" style="left:56px;top:478px;width:3px;height:1px;background:#747474;"></div>
<div class="a" style="left:56px;top:483px;width:3px;height:1px;background:#747474;"></div>
<div class="a" style="left:56px;top:488px;width:3px;height:1px;background:#747474;"></div>
<div class="a" style="left:56px;top:493px;width:3px;height:1px;background:#747474;"></div>
<div class="t" style="left:43.50px;top:451.17px;font-size:9.6px;color:#b9b9b9;">5</div>
<div class="t" style="left:43.50px;top:462.07px;font-size:9.6px;color:#b9b9b9;">0</div>
<div class="t" style="left:43.50px;top:472.97px;font-size:9.6px;color:#b9b9b9;">0</div>
<div class="t" style="left:43.50px;top:483.87px;font-size:9.6px;color:#b9b9b9;">0</div>
<div class="a" style="left:42px;top:498px;width:17px;height:1px;background:#747474;"></div>
<div class="a" style="left:56px;top:503px;width:3px;height:1px;background:#747474;"></div>
<div class="a" style="left:56px;top:508px;width:3px;height:1px;background:#747474;"></div>
<div class="a" style="left:56px;top:513px;width:3px;height:1px;background:#747474;"></div>
<div class="a" style="left:56px;top:518px;width:3px;height:1px;background:#747474;"></div>
<div class="a" style="left:54px;top:523px;width:5px;height:1px;background:#747474;"></div>
<div class="a" style="left:56px;top:528px;width:3px;height:1px;background:#747474;"></div>
<div class="a" style="left:56px;top:533px;width:3px;height:1px;background:#747474;"></div>
<div class="a" style="left:56px;top:538px;width:3px;height:1px;background:#747474;"></div>
<div class="a" style="left:56px;top:543px;width:3px;height:1px;background:#747474;"></div>
<div class="t" style="left:43.50px;top:501.17px;font-size:9.6px;color:#b9b9b9;">6</div>
<div class="t" style="left:43.50px;top:512.07px;font-size:9.6px;color:#b9b9b9;">0</div>
<div class="t" style="left:43.50px;top:522.97px;font-size:9.6px;color:#b9b9b9;">0</div>
<div class="t" style="left:43.50px;top:533.87px;font-size:9.6px;color:#b9b9b9;">0</div>
<div class="a" style="left:42px;top:548px;width:17px;height:1px;background:#747474;"></div>
<div class="a" style="left:56px;top:553px;width:3px;height:1px;background:#747474;"></div>
<div class="a" style="left:56px;top:558px;width:3px;height:1px;background:#747474;"></div>
<div class="a" style="left:56px;top:563px;width:3px;height:1px;background:#747474;"></div>
<div class="a" style="left:56px;top:568px;width:3px;height:1px;background:#747474;"></div>
<div class="a" style="left:54px;top:573px;width:5px;height:1px;background:#747474;"></div>
<div class="a" style="left:56px;top:578px;width:3px;height:1px;background:#747474;"></div>
<div class="a" style="left:56px;top:583px;width:3px;height:1px;background:#747474;"></div>
<div class="a" style="left:56px;top:588px;width:3px;height:1px;background:#747474;"></div>
<div class="a" style="left:56px;top:593px;width:3px;height:1px;background:#747474;"></div>
<div class="t" style="left:43.50px;top:551.17px;font-size:9.6px;color:#b9b9b9;">7</div>
<div class="t" style="left:43.50px;top:562.07px;font-size:9.6px;color:#b9b9b9;">0</div>
<div class="t" style="left:43.50px;top:572.97px;font-size:9.6px;color:#b9b9b9;">0</div>
<div class="t" style="left:43.50px;top:583.87px;font-size:9.6px;color:#b9b9b9;">0</div>
<div class="a" style="left:42px;top:598px;width:17px;height:1px;background:#747474;"></div>
<div class="a" style="left:56px;top:603px;width:3px;height:1px;background:#747474;"></div>
<div class="a" style="left:56px;top:608px;width:3px;height:1px;background:#747474;"></div>
<div class="a" style="left:56px;top:613px;width:3px;height:1px;background:#747474;"></div>
<div class="a" style="left:56px;top:618px;width:3px;height:1px;background:#747474;"></div>
<div class="a" style="left:54px;top:623px;width:5px;height:1px;background:#747474;"></div>
<div class="a" style="left:56px;top:628px;width:3px;height:1px;background:#747474;"></div>
<div class="a" style="left:56px;top:633px;width:3px;height:1px;background:#747474;"></div>
<div class="a" style="left:56px;top:638px;width:3px;height:1px;background:#747474;"></div>
<div class="a" style="left:56px;top:643px;width:3px;height:1px;background:#747474;"></div>
<div class="t" style="left:43.50px;top:601.17px;font-size:9.6px;color:#b9b9b9;">8</div>
<div class="t" style="left:43.50px;top:612.07px;font-size:9.6px;color:#b9b9b9;">0</div>
<div class="t" style="left:43.50px;top:622.97px;font-size:9.6px;color:#b9b9b9;">0</div>
<div class="t" style="left:43.50px;top:633.87px;font-size:9.6px;color:#b9b9b9;">0</div>
<div class="a" style="left:42px;top:648px;width:17px;height:1px;background:#747474;"></div>
<div class="a" style="left:56px;top:653px;width:3px;height:1px;background:#747474;"></div>
<div class="a" style="left:56px;top:658px;width:3px;height:1px;background:#747474;"></div>
<div class="a" style="left:56px;top:663px;width:3px;height:1px;background:#747474;"></div>
<div class="a" style="left:56px;top:668px;width:3px;height:1px;background:#747474;"></div>
<div class="a" style="left:54px;top:673px;width:5px;height:1px;background:#747474;"></div>
<div class="a" style="left:56px;top:678px;width:3px;height:1px;background:#747474;"></div>
<div class="a" style="left:56px;top:683px;width:3px;height:1px;background:#747474;"></div>
<div class="a" style="left:56px;top:688px;width:3px;height:1px;background:#747474;"></div>
<div class="a" style="left:56px;top:693px;width:3px;height:1px;background:#747474;"></div>
<div class="t" style="left:43.50px;top:651.17px;font-size:9.6px;color:#b9b9b9;">9</div>
<div class="t" style="left:43.50px;top:662.07px;font-size:9.6px;color:#b9b9b9;">0</div>
<div class="t" style="left:43.50px;top:672.97px;font-size:9.6px;color:#b9b9b9;">0</div>
<div class="t" style="left:43.50px;top:683.87px;font-size:9.6px;color:#b9b9b9;">0</div>
<div class="a" style="left:42px;top:698px;width:17px;height:1px;background:#747474;"></div>
<div class="a" style="left:56px;top:703px;width:3px;height:1px;background:#747474;"></div>
<div class="a" style="left:56px;top:708px;width:3px;height:1px;background:#747474;"></div>
<div class="a" style="left:56px;top:713px;width:3px;height:1px;background:#747474;"></div>
<div class="a" style="left:56px;top:718px;width:3px;height:1px;background:#747474;"></div>
<div class="t" style="left:43.50px;top:701.17px;font-size:9.6px;color:#b9b9b9;">1</div>
<div class="t" style="left:43.50px;top:712.07px;font-size:9.6px;color:#b9b9b9;">0</div>
</div></div>
<div class="a" style="left:43px;top:377px;width:9px;height:1px;background:#f0f0f0;"></div>
<div class="a" style="left:59px;top:104px;width:725px;height:617px;background:#282828;"></div>
<div class="a" style="left:784px;top:104px;width:16px;height:617px;background:#4b4b4b;"></div>
<svg style="left:789px;top:95px;" width="8" height="5" viewBox="0 0 8 5"><path d="M0.5 4.3L4 0.8L7.5 4.3" fill="none" stroke="#8a8a8a" stroke-width="1.2"/></svg>
<svg style="left:788px;top:709px;" width="8" height="5" viewBox="0 0 8 5"><path d="M0.5 0.7L4 4.2L7.5 0.7" fill="none" stroke="#8a8a8a" stroke-width="1.2"/></svg>
<div class="a" style="left:42px;top:721px;width:48px;height:15px;background:#4b4b4b;"></div>
<div class="a" style="left:90px;top:721px;width:184px;height:15px;background:#535353;"></div>
<div class="a" style="left:274px;top:721px;width:510px;height:15px;background:#4b4b4b;"></div>
<div class="a" style="left:784px;top:721px;width:16px;height:15px;background:#4b4b4b;"></div>
<div class="t" style="left:55.90px;top:723.86px;font-size:12.8px;color:#e6e6e6;transform:scaleX(1.027);transform-origin:0 0;">5%</div>
<div class="t" style="left:113.50px;top:724.28px;font-size:10.3px;color:#c8c8c8;transform:scaleX(0.960);transform-origin:0 0;">8400 px x 8400 px (300 ppi)</div>
<svg style="left:264px;top:725px;" width="5" height="9" viewBox="0 0 5 9"><path d="M0.7 0.5L4.2 4.5L0.7 8.5" fill="none" stroke="#bdbdbd" stroke-width="1.1"/></svg>
<svg style="left:282px;top:725px;" width="5" height="9" viewBox="0 0 5 9"><path d="M4.3 0.5L0.8 4.5L4.3 8.5" fill="none" stroke="#8a8a8a" stroke-width="1.1"/></svg>
<div class="a" style="left:410px;top:722px;width:208px;height:13px;background:#6b6b6b;border-radius:3px"></div>
<svg style="left:771px;top:725px;" width="5" height="9" viewBox="0 0 5 9"><path d="M0.7 0.5L4.2 4.5L0.7 8.5" fill="none" stroke="#8a8a8a" stroke-width="1.1"/></svg>
<div class="a" style="left:800px;top:59px;width:3px;height:677px;background:#383838;"></div>
<div class="a" style="left:801px;top:59px;width:1px;height:677px;background:#434343;"></div>
<div class="a" style="left:1038px;top:71px;width:3px;height:665px;background:#383838;"></div>
<div class="a" style="left:1039px;top:71px;width:1px;height:665px;background:#434343;"></div>
<div class="a" style="left:1078px;top:71px;width:3px;height:665px;background:#383838;"></div>
<div class="a" style="left:1079px;top:71px;width:1px;height:665px;background:#434343;"></div>
<div class="a" style="left:803px;top:59px;width:235px;height:12px;background:#434343;"></div>
<svg style="left:1024px;top:62px;" width="9" height="6" viewBox="0 0 9 6"><path d="M0.7 0.7L3 3L0.7 5.3M4.7 0.7L7 3L4.7 5.3" fill="none" stroke="#f0f0f0" stroke-width="1.3"/></svg>
<div class="a" style="left:803px;top:71px;width:235px;height:28px;background:#434343;"></div>
<div class="a" style="left:803px;top:71px;width:47px;height:28px;background:#535353;"></div>
<div class="t" style="left:812.00px;top:78.98px;font-size:11px;color:#f2f2f2;font-weight:700;transform:scaleX(0.829);transform-origin:0 0;">Layers</div>
<svg style="left:1023px;top:81px;" width="10" height="8" viewBox="0 0 10 8"><g fill="#c4c4c4"><rect x="0" y="0" width="10" height="1"/><rect x="0" y="2.2" width="10" height="1"/><rect x="0" y="4.4" width="10" height="1"/><rect x="0" y="6.6" width="10" height="1"/></g></svg>
<div class="a" style="left:803px;top:98px;width:235px;height:614px;background:#535353;"></div>
<div class="a" style="left:850px;top:98px;width:188px;height:1px;background:#434343;"></div>
<div class="a" style="left:808px;top:107px;width:84px;height:1px;background:#5e5e5e;"></div>
<div class="a" style="left:808px;top:108px;width:84px;height:3px;background:#4d4d4d;"></div>
<div class="a" style="left:1025px;top:105px;width:10px;height:10px;border-radius:50%;background:#626262"></div>
<div class="a" style="left:803px;top:669px;width:220px;height:43px;background:#4e4e4e;"></div>
<div class="a" style="left:803px;top:712px;width:235px;height:1px;background:#3b3b3b;"></div>
<div class="a" style="left:803px;top:713px;width:235px;height:23px;background:#535353;"></div>
<svg style="left:835.5px;top:719.5px;" width="16" height="10" viewBox="0 0 16 10"><path d="M6 2.5H4A2.5 2.5 0 0 0 4 7.5H6M10 2.5H12A2.5 2.5 0 0 1 12 7.5H10M5 5H11" fill="none" stroke="#a8a8a8" stroke-width="1.4"/></svg>
<div class="t" style="left:865.00px;top:718.49px;font-size:13px;color:#a8a8a8;transform:scaleX(1.086);transform-origin:0 0;font-style:italic;">fx</div>
<svg style="left:890px;top:719px;" width="13" height="10" viewBox="0 0 13 10"><rect x="0" y="0" width="13" height="10" fill="#a8a8a8"/><circle cx="6.5" cy="5" r="2.8" fill="#535353"/></svg>
<svg style="left:919px;top:719px;" width="11" height="11" viewBox="0 0 11 11"><circle cx="5.5" cy="5.5" r="4.8" fill="none" stroke="#a8a8a8" stroke-width="1.3"/><path d="M8.9 2.1A4.8 4.8 0 0 1 2.1 8.9Z" fill="#a8a8a8"/></svg>
<svg style="left:876px;top:730px;" width="3" height="2" viewBox="0 0 3 2"><path d="M0 0H3L1.5 2Z" fill="#8a8a8a"/></svg>
<svg style="left:929px;top:730px;" width="3" height="2" viewBox="0 0 3 2"><path d="M0 0H3L1.5 2Z" fill="#8a8a8a"/></svg>
<svg style="left:944.5px;top:718.5px;" width="13" height="11" viewBox="0 0 13 11"><path d="M0 2.5H13V10.5H0Z" fill="#a8a8a8"/><rect x="0.5" y="0.5" width="5" height="1.2" fill="#a8a8a8"/></svg>
<svg style="left:973px;top:719px;" width="11" height="11" viewBox="0 0 11 11"><rect x="0.6" y="0.6" width="9.8" height="9.8" fill="none" stroke="#a8a8a8" stroke-width="1.2"/><path d="M5.5 3V8M3 5.5H8" stroke="#a8a8a8" stroke-width="1.2"/></svg>
<svg style="left:999px;top:718px;" width="11" height="13" viewBox="0 0 11 13"><path d="M0.3 2.3H10.7M3.8 2.3V0.7H7.2V2.3M1.5 3.3L2.2 12.4H8.8L9.5 3.3Z" fill="none" stroke="#a8a8a8" stroke-width="1.1"/><path d="M4 5V10.5M5.5 5V10.5M7 5V10.5" stroke="#a8a8a8" stroke-width="0.9"/></svg>
<div class="a" style="left:1038px;top:59px;width:43px;height:12px;background:#434343;"></div>
<svg style="left:1065px;top:62px;" width="9" height="6" viewBox="0 0 9 6"><path d="M3.3 0.7L1 3L3.3 5.3M7.3 0.7L5 3L7.3 5.3" fill="none" stroke="#f0f0f0" stroke-width="1.3"/></svg>
<div class="a" style="left:1041px;top:71px;width:37px;height:665px;background:#535353;"></div>
<div class="a" style="left:1050px;top:75px;width:1px;height:3px;background:#464646;"></div>
<div class="a" style="left:1052px;top:75px;width:1px;height:3px;background:#464646;"></div>
<div class="a" style="left:1054px;top:75px;width:1px;height:3px;background:#464646;"></div>
<div class="a" style="left:1056px;top:75px;width:1px;height:3px;background:#464646;"></div>
<div class="a" style="left:1058px;top:75px;width:1px;height:3px;background:#464646;"></div>
<div class="a" style="left:1060px;top:75px;width:1px;height:3px;background:#464646;"></div>
<div class="a" style="left:1062px;top:75px;width:1px;height:3px;background:#464646;"></div>
<div class="a" style="left:1064px;top:75px;width:1px;height:3px;background:#464646;"></div>
<div class="a" style="left:1066px;top:75px;width:1px;height:3px;background:#464646;"></div>
<div class="a" style="left:1068px;top:75px;width:1px;height:3px;background:#464646;"></div>
<svg style="left:1053px;top:85px;" width="17" height="18" viewBox="0 0 17 18"><g fill="none" stroke="#e6e6e6" stroke-width="1.1"><rect x="0.6" y="0.6" width="4.2" height="4.2"/><rect x="0.6" y="6.6" width="4.2" height="4.2"/></g><rect x="0" y="12" width="5.2" height="5.2" fill="#e6e6e6"/><path d="M7.7 0.9H14.2L12.9 3C14.6 4.6 15.1 7.1 14.3 9.6C13.4 12.3 10.9 14.4 8.1 15.3C10.1 13.3 11.9 11.1 12.1 8.6C12.3 6.4 11.4 4.9 10.1 4.1L8.9 6.1Z" fill="#e6e6e6"/></svg>
<div class="a" style="left:1081px;top:59px;width:285px;height:12px;background:#434343;"></div>
<svg style="left:1351px;top:62px;" width="9" height="6" viewBox="0 0 9 6"><path d="M0.7 0.7L3 3L0.7 5.3M4.7 0.7L7 3L4.7 5.3" fill="none" stroke="#f0f0f0" stroke-width="1.3"/></svg>
<div class="a" style="left:1081px;top:71px;width:285px;height:28px;background:#434343;"></div>
<div class="a" style="left:1081px;top:71px;width:43px;height:28px;background:#464646;"></div>
<div class="a" style="left:1124px;top:71px;width:60px;height:28px;background:#535353;"></div>
<div class="a" style="left:1184px;top:71px;width:63px;height:28px;background:#464646;"></div>
<div class="a" style="left:1246px;top:71px;width:1px;height:28px;background:#3a3a3a;"></div>
<div class="a" style="left:1247px;top:71px;width:57px;height:28px;background:#464646;"></div>
<div class="a" style="left:1303px;top:71px;width:1px;height:28px;background:#3a3a3a;"></div>
<div class="t" style="left:1090.00px;top:78.98px;font-size:11px;color:#b4b4b4;font-weight:700;transform:scaleX(0.870);transform-origin:0 0;">Color</div>
<div class="t" style="left:1133.00px;top:78.98px;font-size:11px;color:#f2f2f2;font-weight:700;transform:scaleX(0.853);transform-origin:0 0;">Swatches</div>
<div class="t" style="left:1193.30px;top:78.98px;font-size:11px;color:#b4b4b4;font-weight:700;transform:scaleX(0.870);transform-origin:0 0;">Gradients</div>
<div class="t" style="left:1256.20px;top:78.98px;font-size:11px;color:#b4b4b4;font-weight:700;transform:scaleX(0.881);transform-origin:0 0;">Patterns</div>
<svg style="left:1350px;top:81px;" width="10" height="8" viewBox="0 0 10 8"><g fill="#c4c4c4"><rect x="0" y="0" width="10" height="1"/><rect x="0" y="2.2" width="10" height="1"/><rect x="0" y="4.4" width="10" height="1"/><rect x="0" y="6.6" width="10" height="1"/></g></svg>
<div class="a" style="left:1081px;top:98px;width:285px;height:291px;background:#535353;"></div>
<div class="a" style="left:1184px;top:98px;width:182px;height:1px;background:#434343;"></div>
<div class="a" style="left:1081px;top:98px;width:43px;height:1px;background:#434343;"></div>
<div class="a" style="left:1104px;top:109px;width:254px;height:21px;border:1px solid #676767;background:#4a4a4a;border-radius:1px"></div>
<div class="a" style="left:1197px;top:140px;width:16px;height:16px;background:linear-gradient(90deg,#b0b0b0,#f4f4f4)"></div>
<div class="a" style="left:1215px;top:140px;width:16px;height:16px;background:#f7821d;"></div>
<div class="a" style="left:1233px;top:140px;width:16px;height:16px;background:#c3c3c3;"></div>
<div class="a" style="left:1251px;top:140px;width:16px;height:16px;background:#000000;"></div>
<div class="a" style="left:1269px;top:140px;width:16px;height:16px;background:#2c84d8;"></div>
<div class="a" style="left:1287px;top:140px;width:16px;height:16px;background:#2c84d8;"></div>
<div class="a" style="left:1305px;top:140px;width:16px;height:16px;background:#f4b95f;"></div>
<div class="a" style="left:1323px;top:140px;width:16px;height:16px;background:#1f3d33;"></div>
<div class="a" style="left:1341px;top:140px;width:16px;height:16px;background:#f4b95f;"></div>
<div class="a" style="left:1092px;top:165px;width:258px;height:197px;background:#4b4b4b;"></div>
<div class="a" style="left:1092px;top:195px;width:258px;height:1px;background:#4f4f4f;"></div>
<div class="a" style="left:1092px;top:224px;width:258px;height:1px;background:#4f4f4f;"></div>
<div class="a" style="left:1092px;top:253px;width:258px;height:1px;background:#4f4f4f;"></div>
<div class="a" style="left:1092px;top:281px;width:258px;height:1px;background:#4f4f4f;"></div>
<div class="a" style="left:1092px;top:310px;width:258px;height:1px;background:#4f4f4f;"></div>
<div class="a" style="left:1092px;top:338px;width:258px;height:1px;background:#4f4f4f;"></div>
<div class="a" style="left:1351px;top:182px;width:11px;height:122px;background:#6b6b6b;border-radius:2px"></div>
<svg style="left:1353px;top:174px;" width="8" height="5" viewBox="0 0 8 5"><path d="M0.5 4.3L4 0.8L7.5 4.3" fill="none" stroke="#8a8a8a" stroke-width="1.2"/></svg>
<svg style="left:1353px;top:348px;" width="8" height="5" viewBox="0 0 8 5"><path d="M0.5 0.7L4 4.2L7.5 0.7" fill="none" stroke="#8a8a8a" stroke-width="1.2"/></svg>
<svg style="left:1268px;top:368.5px;" width="12" height="10.5" viewBox="0 0 12 10.5"><path d="M0 2H12V10.5H0Z" fill="#d8d8d8"/><rect x="0.3" y="0" width="4.5" height="1.1" fill="#d8d8d8"/></svg>
<svg style="left:1298px;top:369px;" width="11" height="11" viewBox="0 0 11 11"><rect x="0.6" y="0.6" width="9.8" height="9.8" fill="none" stroke="#dcdcdc" stroke-width="1.2"/><path d="M5.5 3V8M3 5.5H8" stroke="#dcdcdc" stroke-width="1.3"/></svg>
<svg style="left:1326px;top:369px;" width="11" height="12" viewBox="0 0 11 12"><path d="M0.3 2.3H10.7M3.8 2.3V0.7H7.2V2.3M1.5 3.3L2.2 11.4H8.8L9.5 3.3Z" fill="none" stroke="#8e8e8e" stroke-width="1.1"/><path d="M4 5V9.5M5.5 5V9.5M7 5V9.5" stroke="#8e8e8e" stroke-width="0.9"/></svg>
<div class="a" style="left:1092px;top:361px;width:258px;height:1px;background:#474747;"></div>
<div class="a" style="left:1081px;top:388px;width:285px;height:1px;background:#3b3b3b;"></div>
<div class="a" style="left:1081px;top:389px;width:285px;height:28px;background:#434343;"></div>
<div class="a" style="left:1081px;top:389px;width:139px;height:28px;background:#464646;"></div>
<div class="a" style="left:1220px;top:389px;width:1px;height:28px;background:#3a3a3a;"></div>
<div class="a" style="left:1221px;top:389px;width:54px;height:28px;background:#464646;"></div>
<div class="a" style="left:1274px;top:389px;width:1px;height:28px;background:#3a3a3a;"></div>
<div class="a" style="left:1275px;top:389px;width:53px;height:28px;background:#464646;"></div>
<div class="a" style="left:1327px;top:389px;width:1px;height:28px;background:#3a3a3a;"></div>
<div class="t" style="left:1201.70px;top:396.98px;font-size:11px;color:#b4b4b4;font-weight:700;transform:scaleX(0.848);transform-origin:0 0;">nts</div>
<div class="t" style="left:1229.00px;top:396.98px;font-size:11px;color:#b4b4b4;font-weight:700;transform:scaleX(0.861);transform-origin:0 0;">Libraries</div>
<div class="t" style="left:1283.00px;top:396.98px;font-size:11px;color:#b4b4b4;font-weight:700;transform:scaleX(0.848);transform-origin:0 0;">Channels</div>
<svg style="left:1350px;top:400px;" width="10" height="8" viewBox="0 0 10 8"><g fill="#c4c4c4"><rect x="0" y="0" width="10" height="1"/><rect x="0" y="2.2" width="10" height="1"/><rect x="0" y="4.4" width="10" height="1"/><rect x="0" y="6.6" width="10" height="1"/></g></svg>
<div class="a" style="left:1081px;top:416px;width:285px;height:259px;background:#535353;"></div>
<div class="a" style="left:1081px;top:416px;width:285px;height:1px;background:#3b3b3b;"></div>
<div class="a" style="left:1081px;top:451px;width:285px;height:1px;background:#3e3e3e;"></div>
<div class="a" style="left:1349px;top:452px;width:17px;height:223px;background:#4b4b4b;"></div>
<svg style="left:1353px;top:460px;" width="8" height="5" viewBox="0 0 8 5"><path d="M0.5 4.3L4 0.8L7.5 4.3" fill="none" stroke="#8a8a8a" stroke-width="1.2"/></svg>
<div class="a" style="left:1351px;top:470px;width:12px;height:97px;background:#6b6b6b"></div>
<svg style="left:1353px;top:666px;" width="8" height="5" viewBox="0 0 8 5"><path d="M0.5 0.7L4 4.2L7.5 0.7" fill="none" stroke="#8a8a8a" stroke-width="1.2"/></svg>
<div class="t" style="left:1215.00px;top:487.18px;font-size:11px;color:#d8d8d8;transform:scaleX(1.021);transform-origin:0 0;">X</div>
<div class="a" style="left:1230px;top:482px;width:53px;height:18px;border:1px solid #5f5f5f;background:#4f4f4f"></div>
<div class="t" style="left:1236.00px;top:486.61px;font-size:10.5px;color:#6e6e6e;transform:scaleX(0.957);transform-origin:0 0;">0 px</div>
<div class="t" style="left:1215.00px;top:511.18px;font-size:11px;color:#d8d8d8;transform:scaleX(1.021);transform-origin:0 0;">Y</div>
<div class="a" style="left:1230px;top:507px;width:53px;height:18px;border:1px solid #5f5f5f;background:#4f4f4f"></div>
<div class="t" style="left:1236.00px;top:511.61px;font-size:10.5px;color:#6e6e6e;transform:scaleX(0.957);transform-origin:0 0;">0 px</div>
<div class="t" style="left:1201.60px;top:572.18px;font-size:11px;color:#e0e0e0;transform:scaleX(0.907);transform-origin:0 0;">300 pixels/inch</div>
<div class="a" style="left:1190px;top:594px;width:92px;height:22px;border:1px solid #5e5e5e;background:#474747;border-radius:3px"></div>
<svg style="left:1270px;top:603px;" width="8" height="5" viewBox="0 0 8 5"><path d="M0.5 0.7L4 4.2L7.5 0.7" fill="none" stroke="#d8d8d8" stroke-width="1.3"/></svg>
<div class="a" style="left:1190px;top:619px;width:92px;height:22px;border:1px solid #5e5e5e;background:#474747;border-radius:3px"></div>
<svg style="left:1270px;top:628px;" width="8" height="5" viewBox="0 0 8 5"><path d="M0.5 0.7L4 4.2L7.5 0.7" fill="none" stroke="#d8d8d8" stroke-width="1.3"/></svg>
<div class="a" style="left:1190px;top:647px;width:92px;height:22px;border:1px solid #5e5e5e;background:#474747;border-radius:3px"></div>
<svg style="left:1270px;top:656px;" width="8" height="5" viewBox="0 0 8 5"><path d="M0.5 0.7L4 4.2L7.5 0.7" fill="none" stroke="#d8d8d8" stroke-width="1.3"/></svg>
<div class="t" style="left:1202.00px;top:624.76px;font-size:11.5px;color:#e0e0e0;transform:scaleX(0.920);transform-origin:0 0;">nnel</div>
<div class="t" style="left:1197.50px;top:652.76px;font-size:11.5px;color:#e0e0e0;">e</div>
<div class="a" style="left:1081px;top:675px;width:268px;height:1px;background:#4a4a4a;"></div>
<div class="a" style="left:1081px;top:705px;width:285px;height:1px;background:#3b3b3b;"></div>
<div class="a" style="left:1081px;top:706px;width:285px;height:30px;background:#434343;"></div>
<div class="a" style="left:1081px;top:708px;width:43px;height:28px;background:#535353;"></div>
<div class="t" style="left:1090.00px;top:715.68px;font-size:11px;color:#f2f2f2;font-weight:700;transform:scaleX(0.841);transform-origin:0 0;">Paths</div>
<svg style="left:1350px;top:718px;" width="10" height="8" viewBox="0 0 10 8"><g fill="#c4c4c4"><rect x="0" y="0" width="10" height="1"/><rect x="0" y="2.2" width="10" height="1"/><rect x="0" y="4.4" width="10" height="1"/><rect x="0" y="6.6" width="10" height="1"/></g></svg>
<div class="a" style="left:136px;top:111px;width:1066px;height:558px;box-shadow:0 0 7px 2px rgba(0,0,0,0.35)"></div>
<div class="a" style="left:136px;top:111px;width:1066px;height:30px;background:#ffffff;"></div>
<div class="t" style="left:144.50px;top:120.68px;font-size:12.3px;color:#000000;transform:scaleX(0.940);transform-origin:0 0;">Export As</div>
<svg style="left:1181px;top:120px;" width="12" height="11" viewBox="0 0 12 11"><path d="M0.8 0.5L11 10.5M11 0.5L0.8 10.5" stroke="#000" stroke-width="1.15"/></svg>
<div class="a" style="left:136px;top:141px;width:1066px;height:528px;background:#535353;"></div>
<div class="a" style="left:144px;top:165px;width:304px;height:96px;border:1px solid #474747;border-bottom:1px solid #474747"></div>
<div class="a" style="left:152px;top:165px;width:64px;height:1px;background:#535353;"></div>
<div class="t" style="left:160.60px;top:159.64px;font-size:14px;color:#ececec;transform:scaleX(0.898);transform-origin:0 0;-webkit-text-stroke:0.25px #ececec;">Scale All</div>
<div class="t" style="left:164.80px;top:185.59px;font-size:14.3px;color:#ececec;transform:scaleX(0.808);transform-origin:0 0;">Size:</div>
<div class="t" style="left:252.60px;top:185.59px;font-size:14.3px;color:#ececec;transform:scaleX(0.876);transform-origin:0 0;">Suffix:</div>
<svg style="left:400px;top:186px;" width="13" height="13" viewBox="0 0 13 13"><path d="M6.5 0V13M0 6.5H13" stroke="#bdbdbd" stroke-width="1.7"/></svg>
<div class="a" style="left:165px;top:216px;width:80px;height:32px;background:#474747;border:1px solid #5a5a5a;border-radius:3px"></div>
<div class="t" style="left:181.00px;top:225.99px;font-size:13px;color:#e6e6e6;transform:scaleX(0.983);transform-origin:0 0;">1x</div>
<svg style="left:222px;top:229px;" width="11" height="7" viewBox="0 0 11 7"><path d="M1 1L5.5 5.5L10 1" fill="none" stroke="#dcdcdc" stroke-width="1.8"/></svg>
<div class="a" style="left:253px;top:216px;width:126px;height:32px;background:#474747;border:1px solid #5a5a5a;border-radius:3px"></div>
<svg style="left:399px;top:223px;" width="15" height="17" viewBox="0 0 15 17"><path d="M0.5 2.6H14.5" stroke="#727272" stroke-width="1.6"/><path d="M5 2.6V0.8H10V2.6" fill="none" stroke="#727272" stroke-width="1.3"/><path d="M1.8 4L2.8 16.5H12.2L13.2 4Z" fill="#727272"/><path d="M5.2 6V14.5M7.5 6V14.5M9.8 6V14.5" stroke="#535353" stroke-width="0.9"/></svg>
<div class="a" style="left:144px;top:277px;width:304px;height:384px;border:1px solid #474747"></div>
<svg style="left:154.5px;top:294.5px;" width="15.3" height="15.3" viewBox="0 0 15.3 15.3"><rect x="0" y="0" width="15.3" height="15.3" rx="2" fill="#dadada"/><path d="M3.672 7.956L6.426 11.016L11.934000000000001 4.59" fill="none" stroke="#333333" stroke-width="1.9" stroke-linecap="round" stroke-linejoin="round"/></svg>
<div class="t" style="left:178.60px;top:294.92px;font-size:14.5px;color:#e8e8e8;transform:scaleX(0.883);transform-origin:0 0;">Select All</div>
<div class="a" style="left:145px;top:326px;width:302px;height:63px;background:#393939;"></div>
<svg style="left:154.5px;top:350.8px;" width="15.3" height="15.3" viewBox="0 0 15.3 15.3"><rect x="0" y="0" width="15.3" height="15.3" rx="2" fill="#dadada"/><path d="M3.672 7.956L6.426 11.016L11.934000000000001 4.59" fill="none" stroke="#333333" stroke-width="1.9" stroke-linecap="round" stroke-linejoin="round"/></svg>
<div class="a" style="left:183px;top:338px;width:40px;height:40px;background:#ffffff;"></div>
<div class="a" style="left:197px;top:350px;width:12px;height:11px;background:#1f1f23;"></div>
<div class="t" style="left:235.30px;top:342.79px;font-size:13px;color:#e6e6e6;transform:scaleX(0.969);transform-origin:0 0;-webkit-text-stroke:0.25px #e6e6e6;">Untitled-1</div>
<div class="t" style="left:235.30px;top:362.69px;font-size:13px;color:#e6e6e6;transform:scaleX(0.841);transform-origin:0 0;">PNG</div>
<div class="t" style="left:296.40px;top:362.69px;font-size:13px;color:#e6e6e6;transform:scaleX(0.851);transform-origin:0 0;">1000 x 1000</div>
<div class="t" style="left:401.80px;top:362.69px;font-size:13px;color:#e6e6e6;transform:scaleX(0.804);transform-origin:0 0;">13.2 KB</div>
<div class="t" style="left:464.40px;top:157.24px;font-size:14px;color:#ffffff;font-weight:700;transform:scaleX(0.858);transform-origin:0 0;">Preview</div>
<div class="a" style="left:464px;top:178px;width:46px;height:3px;background:#ffffff;"></div>
<div class="t" style="left:533.90px;top:157.24px;font-size:14px;color:#b3b3b3;transform:scaleX(0.886);transform-origin:0 0;">2-Up</div>
<div class="a" style="left:456px;top:180px;width:426px;height:481px;background:#282828;"></div>
<div class="a" style="left:502px;top:235px;width:333px;height:333px;background:#ffffff;"></div>
<div class="a" style="left:622px;top:331px;width:93px;height:94px;background:#1f1f23;"></div>
<svg style="left:614px;top:634px;" width="16" height="16" viewBox="0 0 16 16"><circle cx="8" cy="8" r="8" fill="#a7a7a7"/><rect x="3.5" y="6.9" width="9" height="2.3" fill="#262626"/></svg>
<div class="t" style="left:648.60px;top:636.02px;font-size:14.5px;color:#e6e6e6;transform:scaleX(0.829);transform-origin:0 0;">33.33%</div>
<svg style="left:706px;top:634px;" width="16" height="16" viewBox="0 0 16 16"><circle cx="8" cy="8" r="8" fill="#a7a7a7"/><rect x="3.5" y="6.9" width="9" height="2.3" fill="#262626"/><rect x="6.85" y="3.5" width="2.3" height="9" fill="#262626"/></svg>
<div class="a" style="left:882px;top:141px;width:319px;height:483px;overflow:hidden">
<div class="a" style="left:-882px;top:-141px;width:1366px;height:736px">
<div class="a" style="left:890px;top:165px;width:288px;height:126px;border:1px solid #474747;border-bottom:1px solid #474747"></div>
<div class="a" style="left:899px;top:165px;width:84px;height:1px;background:#535353;"></div>
<div class="t" style="left:907.40px;top:159.64px;font-size:14px;color:#ececec;transform:scaleX(0.873);transform-origin:0 0;-webkit-text-stroke:0.25px #ececec;">File Settings</div>
<div class="t" style="left:926.70px;top:195.09px;font-size:14.3px;color:#ececec;transform:scaleX(0.889);transform-origin:0 0;">Format:</div>
<div class="a" style="left:980px;top:187px;width:165px;height:31px;background:#474747;border:1px solid #5a5a5a;border-radius:3px"></div>
<div class="t" style="left:992.20px;top:195.09px;font-size:14.3px;color:#e6e6e6;transform:scaleX(0.807);transform-origin:0 0;">PNG</div>
<svg style="left:1122px;top:199px;" width="11" height="7" viewBox="0 0 11 7"><path d="M1 1L5.5 5.5L10 1" fill="none" stroke="#dcdcdc" stroke-width="1.8"/></svg>
<svg style="left:980.6px;top:231px;" width="15" height="15" viewBox="0 0 15 15"><rect x="0" y="0" width="15" height="15" rx="2" fill="#dadada"/><path d="M3.5999999999999996 7.800000000000001L6.3 10.799999999999999L11.700000000000001 4.5" fill="none" stroke="#333333" stroke-width="1.9" stroke-linecap="round" stroke-linejoin="round"/></svg>
<div class="t" style="left:1005.70px;top:230.39px;font-size:14.3px;color:#ececec;transform:scaleX(0.861);transform-origin:0 0;">Transparency</div>
<div class="a" style="left:980.6px;top:258.7px;width:15px;height:15px;background:#474747;border:1.2px solid #6f6f6f;border-radius:2px"></div>
<div class="t" style="left:1005.70px;top:258.39px;font-size:14.3px;color:#ececec;transform:scaleX(0.893);transform-origin:0 0;">Smaller File (8-bit)</div>
<div class="a" style="left:890px;top:307px;width:288px;height:190px;border:1px solid #474747;border-bottom:1px solid #474747"></div>
<div class="a" style="left:899px;top:307px;width:77px;height:1px;background:#535353;"></div>
<div class="t" style="left:907.30px;top:301.64px;font-size:14px;color:#ececec;transform:scaleX(0.862);transform-origin:0 0;-webkit-text-stroke:0.25px #ececec;">Image Size</div>
<div class="t" style="left:933.80px;top:337.19px;font-size:14.3px;color:#ececec;transform:scaleX(0.913);transform-origin:0 0;">Width:</div>
<div class="a" style="left:980px;top:329px;width:165px;height:31px;background:#474747;border:1px solid #5a5a5a;border-radius:3px"></div>
<div class="t" style="left:995.60px;top:337.77px;font-size:13.5px;color:#e6e6e6;transform:scaleX(0.889);transform-origin:0 0;">1000</div>
<div class="t" style="left:1153.80px;top:337.19px;font-size:14.3px;color:#ececec;transform:scaleX(0.867);transform-origin:0 0;">px</div>
<div class="t" style="left:930.40px;top:377.59px;font-size:14.3px;color:#ececec;transform:scaleX(0.892);transform-origin:0 0;">Height:</div>
<div class="a" style="left:980px;top:369px;width:165px;height:31px;background:#474747;border:1px solid #5a5a5a;border-radius:3px"></div>
<div class="t" style="left:995.60px;top:377.77px;font-size:13.5px;color:#e6e6e6;transform:scaleX(0.889);transform-origin:0 0;">1000</div>
<div class="t" style="left:1153.80px;top:377.59px;font-size:14.3px;color:#ececec;transform:scaleX(0.867);transform-origin:0 0;">px</div>
<div class="t" style="left:937.90px;top:417.39px;font-size:14.3px;color:#ececec;transform:scaleX(0.828);transform-origin:0 0;">Scale:</div>
<div class="a" style="left:980px;top:409px;width:165px;height:31px;background:#474747;border:1px solid #5a5a5a;border-radius:3px"></div>
<div class="t" style="left:995.60px;top:417.77px;font-size:13.5px;color:#e6e6e6;transform:scaleX(0.966);transform-origin:0 0;">11.9%</div>
<svg style="left:1122px;top:421px;" width="11" height="7" viewBox="0 0 11 7"><path d="M1 1L5.5 5.5L10 1" fill="none" stroke="#dcdcdc" stroke-width="1.8"/></svg>
<div class="t" style="left:912.00px;top:457.49px;font-size:14.3px;color:#ececec;transform:scaleX(0.860);transform-origin:0 0;">Resample:</div>
<div class="a" style="left:980px;top:449px;width:165px;height:31px;background:#474747;border:1px solid #5a5a5a;border-radius:3px"></div>
<div class="t" style="left:992.20px;top:457.09px;font-size:14.3px;color:#e6e6e6;transform:scaleX(0.907);transform-origin:0 0;">Bicubic Automatic</div>
<svg style="left:1122px;top:461px;" width="11" height="7" viewBox="0 0 11 7"><path d="M1 1L5.5 5.5L10 1" fill="none" stroke="#dcdcdc" stroke-width="1.8"/></svg>
<div class="a" style="left:890px;top:513px;width:288px;height:140px;border:1px solid #474747;border-bottom:none"></div>
<div class="a" style="left:899px;top:513px;width:82px;height:1px;background:#535353;"></div>
<div class="t" style="left:907.20px;top:507.64px;font-size:14px;color:#ececec;transform:scaleX(0.835);transform-origin:0 0;-webkit-text-stroke:0.25px #ececec;">Canvas Size</div>
<div class="t" style="left:933.80px;top:542.89px;font-size:14.3px;color:#ececec;transform:scaleX(0.913);transform-origin:0 0;">Width:</div>
<div class="a" style="left:980px;top:535px;width:165px;height:31px;background:#474747;border:1px solid #5a5a5a;border-radius:3px"></div>
<div class="t" style="left:995.60px;top:543.77px;font-size:13.5px;color:#e6e6e6;transform:scaleX(0.889);transform-origin:0 0;">1000</div>
<div class="t" style="left:1153.80px;top:542.89px;font-size:14.3px;color:#ececec;transform:scaleX(0.867);transform-origin:0 0;">px</div>
<div class="t" style="left:930.40px;top:582.69px;font-size:14.3px;color:#ececec;transform:scaleX(0.892);transform-origin:0 0;">Height:</div>
<div class="a" style="left:980px;top:574px;width:165px;height:31px;background:#474747;border:1px solid #5a5a5a;border-radius:3px"></div>
<div class="t" style="left:995.60px;top:582.77px;font-size:13.5px;color:#e6e6e6;transform:scaleX(0.889);transform-origin:0 0;">1000</div>
<div class="t" style="left:1153.80px;top:582.69px;font-size:14.3px;color:#ececec;transform:scaleX(0.867);transform-origin:0 0;">px</div>
<div class="a" style="left:1106px;top:614px;width:55px;height:24px;background:#4a4a4a;border:1px solid #5a5a5a;border-radius:3px"></div>
<div class="t" style="left:1121.00px;top:620.84px;font-size:12px;color:#8a8a8a;transform:scaleX(0.765);transform-origin:0 0;">Reset</div>
</div></div>
<div class="a" style="left:1186px;top:150px;width:16px;height:474px;background:#4b4b4b;"></div>
<svg style="left:1191px;top:156px;" width="8" height="5" viewBox="0 0 8 5"><path d="M0.5 4.3L4 0.8L7.5 4.3" fill="none" stroke="#8a8a8a" stroke-width="1.2"/></svg>
<div class="a" style="left:1188px;top:166px;width:12px;height:247px;background:#6b6b6b"></div>
<svg style="left:1191px;top:612px;" width="8" height="5" viewBox="0 0 8 5"><path d="M0.5 0.7L4 4.2L7.5 0.7" fill="none" stroke="#8a8a8a" stroke-width="1.2"/></svg>
<div class="t" style="left:892.00px;top:640.16px;font-size:12.8px;color:#e6e6e6;transform:scaleX(0.855);transform-origin:0 0;-webkit-text-stroke:0.45px #e6e6e6;">v5.10.0</div>
<div class="a" style="left:1036px;top:625px;width:72px;height:32px;border:2px solid #f2f2f2;border-radius:16px"></div>
<div class="t" style="left:1052.40px;top:633.32px;font-size:14.5px;color:#f2f2f2;font-weight:700;transform:scaleX(0.824);transform-origin:0 0;">Cancel</div>
<div class="a" style="left:1120px;top:625px;width:72px;height:32px;background:#1473e6;border-radius:16px"></div>
<div class="t" style="left:1136.30px;top:633.32px;font-size:14.5px;color:#ffffff;font-weight:700;transform:scaleX(0.867);transform-origin:0 0;">Export</div>
<div class="t" style="left:1073.70px;top:661.28px;font-size:19.5px;color:rgba(200,200,200,0.45);transform:scaleX(1.012);transform-origin:0 0;">Activate Windows</div>
<div class="t" style="left:1073.70px;top:686.52px;font-size:14.5px;color:rgba(200,200,200,0.45);transform:scaleX(1.025);transform-origin:0 0;">Go to Settings to activate Windows.</div>
</body></html>
